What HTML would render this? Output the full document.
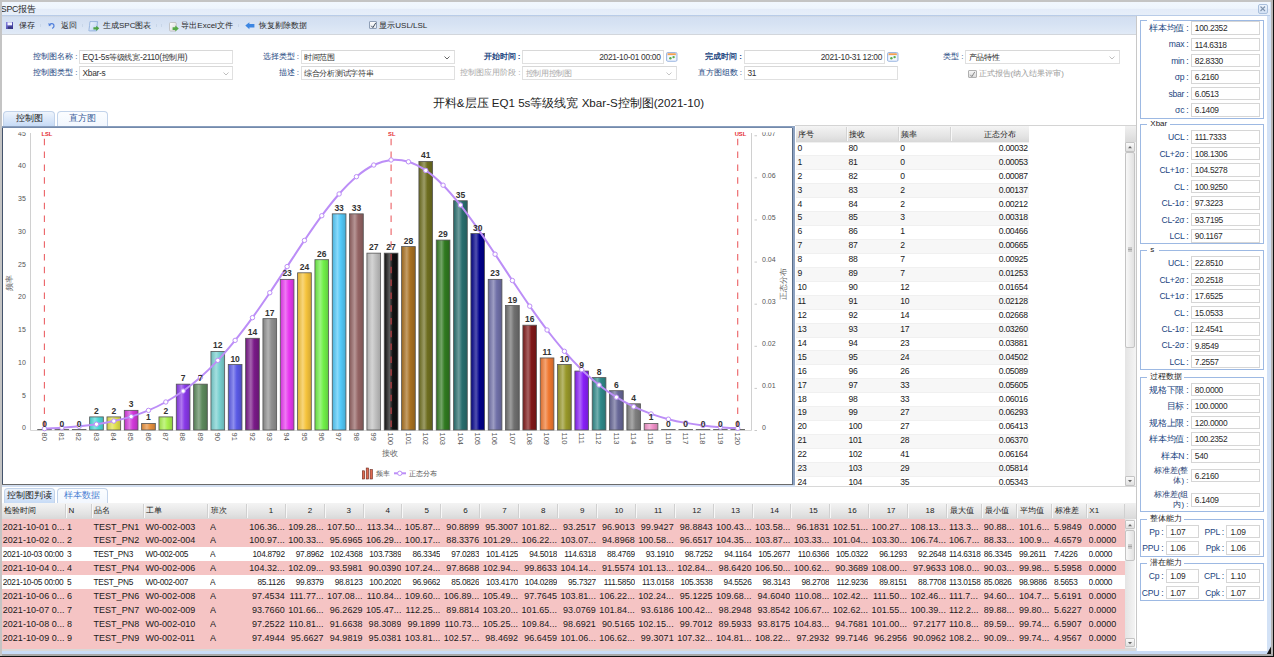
<!DOCTYPE html><html><head><meta charset="utf-8"><style>
*{margin:0;padding:0;box-sizing:border-box}
html,body{width:1274px;height:657px;overflow:hidden;background:#c4c4c4;position:relative;font-family:"Liberation Sans",sans-serif;font-size:8px;color:#222}
div{position:absolute;white-space:nowrap}
span{white-space:nowrap}
.lbl{color:#1f3f7a;text-align:right}
.inp{background:#fff;border:1px solid #d0d0d0;border-top-color:#c6c6c6}
.inpt{color:#333;font-size:8px}
</style></head><body><div style="left:1270.8px;top:0px;width:2.2px;height:657px;background:#b4b4b4"></div>
<div style="left:1273px;top:0px;width:1px;height:657px;background:#111"></div>
<div style="left:0px;top:656px;width:1274px;height:1px;background:#111"></div>
<div style="left:2px;top:2px;width:1268.8px;height:652px;background:#d3e2f6"></div>
<div style="left:2px;top:2px;width:1268px;height:13.5px;background:linear-gradient(#f1f7fe 0,#eef5fd 45%,#e4ecf9 52%,#e7eff9 100%)"></div>
<div style="left:2px;top:15px;width:1268px;height:1px;background:#b9cce8"></div>
<div style="left:2px;top:2px;width:200px;height:13px;overflow:hidden"><div style="left:-1.2px;top:1px;height:12px;line-height:12px;font-size:8.8px;color:#2a2a2a;letter-spacing:-0.3px">SPC报告</div></div>
<div style="left:1258px;top:4px;width:9.5px;height:9.5px;border:1px solid #a9bfdc;border-radius:2px;background:linear-gradient(#eef4fc,#d2e0f4)"><svg width="8" height="8" style="position:absolute;left:0;top:0"><path d="M1.5 1.5L6 6M6 1.5L1.5 6" stroke="#7f93ad" stroke-width="1.1"/></svg></div>
<div style="left:2px;top:16px;width:1134px;height:18.5px;background:linear-gradient(#cdd3dc 0,#d3dff1 6%,#d6e2f3 40%,#e2ebf7 100%)"></div>
<div style="left:2px;top:34px;width:1134px;height:1px;background:#d2d6dc"></div>
<div style="left:2px;top:35px;width:1134px;height:613px;background:#fff"></div>
<div style="left:1136px;top:16px;width:1px;height:632px;background:#c8c8c8"></div>
<div style="left:1137px;top:16px;width:129.5px;height:635px;background:#fff"></div>
<div style="left:2px;top:648px;width:1134px;height:3px;background:#d8d8d8"></div>
<div style="left:2px;top:651px;width:1266px;height:3px;background:#c9dcf7"></div>
<svg width="6" height="9" style="position:absolute;left:1266px;top:646px"><path d="M5 0.5 V8 H0.8 Z" fill="#151515"/></svg>
<div style="left:2px;top:654px;width:1271px;height:2px;background:#a8a8a8"></div>
<div style="left:6px;top:21.8px;width:7.5px;height:7px;"><svg width="8" height="8" style="position:absolute;left:0;top:0"><defs><linearGradient id="sv" x1="0" y1="0" x2="1" y2="1"><stop offset="0" stop-color="#8a86e6"/><stop offset="1" stop-color="#2c2a8a"/></linearGradient></defs><rect x="0" y="0" width="7" height="7" fill="url(#sv)"/><rect x="1.5" y="0.3" width="4.5" height="3" fill="#f4f4ff"/><rect x="2" y="4.6" width="3.5" height="2.2" fill="#3a3a7a"/></svg></div>
<div style="left:19px;top:19.5px;height:12px;line-height:12px;font-size:8px;color:#2a2a2a;padding-top:0.8px">保存</div>
<div style="left:39.5px;top:24px;width:1px;height:3px;background:#c8d6e8"></div>
<div style="left:47.5px;top:21.8px;width:8px;height:8px;"><svg width="8" height="8" style="position:absolute;left:0;top:0"><path d="M1.6 2.6 C3 1.3 5.2 1.4 5.9 3 C6.4 4.3 5.6 5.6 4.3 6.6" fill="none" stroke="#4f7fdc" stroke-width="1.3"/><path d="M0.3 0.9 L0.9 4.2 L3.4 2.9 Z" fill="#4f7fdc"/></svg></div>
<div style="left:60.5px;top:19.5px;height:12px;line-height:12px;font-size:8px;color:#2a2a2a;padding-top:0.8px">返回</div>
<div style="left:82px;top:24px;width:1px;height:3px;background:#c8d6e8"></div>
<div style="left:88px;top:20.5px;width:12px;height:11px;"><svg width="12" height="11" style="position:absolute;left:0;top:0"><defs><linearGradient id="spg" x1="0" y1="0" x2="1" y2="1"><stop offset="0" stop-color="#f4f8ff"/><stop offset="1" stop-color="#b8d0f0"/></linearGradient></defs><path d="M2 0.6 H9.6 C9 2.5 9.2 6 9.4 8.4 L8.6 9.9 H1.2 C0.7 9.6 0.6 9 1 8.6 C1.6 6 1.6 3 2 0.6 Z" fill="url(#spg)" stroke="#7da0d4" stroke-width="0.7"/><path d="M5.4 6.2 H8.2 V4.7 L11.3 7.3 L8.2 9.9 V8.4 H5.4 Z" fill="#4ea444"/></svg></div>
<div style="left:103px;top:19.5px;height:12px;line-height:12px;font-size:8px;color:#2a2a2a;padding-top:0.8px">生成SPC图表</div>
<div style="left:156px;top:24px;width:1px;height:3px;background:#c8d6e8"></div>
<div style="left:160.5px;top:24px;width:1px;height:3px;background:#c8d6e8"></div>
<div style="left:168.5px;top:21.5px;width:11px;height:10px;"><svg width="11" height="10" style="position:absolute;left:0;top:0"><defs><linearGradient id="exg" x1="0" y1="0" x2="1" y2="1"><stop offset="0" stop-color="#ffffff"/><stop offset="1" stop-color="#d8d8d8"/></linearGradient></defs><rect x="0.5" y="0.5" width="6.8" height="8.6" rx="1.2" fill="url(#exg)" stroke="#b4b4b4" stroke-width="0.7"/><path d="M3.6 5.3 H6.3 V3.6 L9.8 6.6 L6.3 9.6 V7.9 H3.6 Z" fill="#56aa48"/></svg></div>
<div style="left:181.3px;top:19.5px;height:12px;line-height:12px;font-size:8px;color:#2a2a2a;padding-top:0.8px">导出Excel文件</div>
<div style="left:237.5px;top:24px;width:1px;height:3px;background:#c8d6e8"></div>
<div style="left:245.3px;top:21.8px;width:10px;height:8px;"><svg width="10" height="8" style="position:absolute;left:0;top:0"><path d="M0.3 3.6 L4.4 0.2 V2 H9.4 V5.4 H4.4 V7.2 Z" fill="#3c86e2"/></svg></div>
<div style="left:259.3px;top:19.5px;height:12px;line-height:12px;font-size:8px;color:#2a2a2a;padding-top:0.8px">恢复剔除数据</div>
<div style="left:369px;top:20.8px;width:8.3px;height:8px;border:1px solid #8f9fb6;background:linear-gradient(#fbfbfb,#e6e9ee);border-radius:1px"><svg width="8" height="8" style="position:absolute;left:0;top:0"><path d="M1.3 3.8L2.9 5.6L5.8 0.8" stroke="#3f4c5c" stroke-width="1" fill="none"/></svg></div>
<div style="left:379.3px;top:19.5px;height:12px;line-height:12px;font-size:8px;color:#2a2a2a;padding-top:0.8px">显示USL/LSL</div>
<div style="left:-22.5px;top:49.5px;width:100px;height:14px;line-height:14px;font-size:8px;color:#23467f;text-align:right">控制图名称 :</div>
<div style="left:79px;top:49.5px;width:154px;height:14px;background:#fff;border:1px solid #e0e0e0;border-top-color:#d8d8d8"><div style="left:2.5px;top:0;height:12px;line-height:13px;color:#333;font-size:8.4px;letter-spacing:-0.3px">EQ1-5s等级线宽-2110(控制用)</div></div>
<div style="left:-22.5px;top:66.3px;width:100px;height:14px;line-height:14px;font-size:8px;color:#23467f;text-align:right">控制图类型 :</div>
<div style="left:79px;top:66.3px;width:154px;height:14px;background:#fff;border:1px solid #e0e0e0;border-top-color:#d8d8d8"><div style="left:2.5px;top:0;height:12px;line-height:13px;color:#333;font-size:8.4px;letter-spacing:-0.3px">Xbar-s</div><svg width="8" height="6" style="position:absolute;right:2.5px;top:4px"><path d="M1.5 1.5L4 4L6.5 1.5" stroke="#b8b8b8" stroke-width="0.9" fill="none"/></svg></div>
<div style="left:199px;top:49.5px;width:100px;height:14px;line-height:14px;font-size:8px;color:#23467f;text-align:right">选择类型 :</div>
<div style="left:300.5px;top:49.5px;width:154.0px;height:14px;background:#fff;border:1px solid #e0e0e0;border-top-color:#d8d8d8"><div style="left:2.5px;top:0;height:12px;line-height:13px;color:#333;font-size:8.4px;letter-spacing:-0.3px">时间范围</div><svg width="8" height="6" style="position:absolute;right:2.5px;top:4px"><path d="M1.5 1.5L4 4L6.5 1.5" stroke="#555" stroke-width="0.9" fill="none"/></svg></div>
<div style="left:199px;top:66.3px;width:100px;height:14px;line-height:14px;font-size:8px;color:#23467f;text-align:right">描述 :</div>
<div style="left:300.5px;top:66.3px;width:154.0px;height:14px;background:#fff;border:1px solid #e0e0e0;border-top-color:#d8d8d8"><div style="left:2.5px;top:0;height:12px;line-height:13px;color:#333;font-size:8.4px;letter-spacing:-0.3px">综合分析测试字符串</div></div>
<div style="left:420.5px;top:49.5px;width:100px;height:14px;line-height:14px;font-size:8px;color:#23467f;font-weight:bold;text-align:right">开始时间 :</div>
<div style="left:522px;top:49.5px;width:141.5px;height:14px;background:#fff;border:1px solid #e0e0e0;border-top-color:#d8d8d8"><div style="right:2px;top:0;height:12px;line-height:13px;color:#333;font-size:8.4px;letter-spacing:-0.3px">2021-10-01 00:00</div></div>
<svg width="12" height="10" style="position:absolute;left:665.5px;top:52px"><rect x="0.5" y="0.5" width="10.5" height="8.8" rx="1.3" fill="#dce8fa" stroke="#9fb9e3" stroke-width="1"/><rect x="1.6" y="1.3" width="8.2" height="2" fill="#f6a050"/><rect x="1.6" y="3.3" width="8.2" height="5" fill="#f4f8fd"/><circle cx="4.4" cy="6.3" r="1.2" fill="#5aac4e"/><circle cx="7.6" cy="5.1" r="1.2" fill="#5aac4e"/></svg>
<div style="left:420.5px;top:66.3px;width:100px;height:14px;line-height:14px;font-size:8px;color:#a8a8a8;text-align:right">控制图应用阶段 :</div>
<div style="left:522px;top:66.3px;width:154.5px;height:14px;background:#fff;border:1px solid #e0e0e0;border-top-color:#d8d8d8"><div style="left:2.5px;top:0;height:12px;line-height:13px;color:#a8a8a8;font-size:8.4px;letter-spacing:-0.3px">控制用控制图</div><svg width="8" height="6" style="position:absolute;right:2.5px;top:4px"><path d="M1.5 1.5L4 4L6.5 1.5" stroke="#c0c0c0" stroke-width="0.9" fill="none"/></svg></div>
<div style="left:642px;top:49.5px;width:100px;height:14px;line-height:14px;font-size:8px;color:#23467f;font-weight:bold;text-align:right">完成时间 :</div>
<div style="left:744px;top:49.5px;width:141px;height:14px;background:#fff;border:1px solid #e0e0e0;border-top-color:#d8d8d8"><div style="right:2px;top:0;height:12px;line-height:13px;color:#333;font-size:8.4px;letter-spacing:-0.3px">2021-10-31 12:00</div></div>
<svg width="12" height="10" style="position:absolute;left:886.5px;top:52px"><rect x="0.5" y="0.5" width="10.5" height="8.8" rx="1.3" fill="#dce8fa" stroke="#9fb9e3" stroke-width="1"/><rect x="1.6" y="1.3" width="8.2" height="2" fill="#f6a050"/><rect x="1.6" y="3.3" width="8.2" height="5" fill="#f4f8fd"/><circle cx="4.4" cy="6.3" r="1.2" fill="#5aac4e"/><circle cx="7.6" cy="5.1" r="1.2" fill="#5aac4e"/></svg>
<div style="left:642px;top:66.3px;width:100px;height:14px;line-height:14px;font-size:8px;color:#23467f;text-align:right">直方图组数 :</div>
<div style="left:744px;top:66.3px;width:153.5px;height:14px;background:#fff;border:1px solid #e0e0e0;border-top-color:#d8d8d8"><div style="left:2.5px;top:0;height:12px;line-height:13px;color:#333;font-size:8.4px;letter-spacing:-0.3px">31</div></div>
<div style="left:863.5px;top:49.5px;width:100px;height:14px;line-height:14px;font-size:8px;color:#23467f;text-align:right">类型 :</div>
<div style="left:965px;top:49.5px;width:154.5px;height:14px;background:#fff;border:1px solid #e0e0e0;border-top-color:#d8d8d8"><div style="left:2.5px;top:0;height:12px;line-height:13px;color:#222;font-size:8.4px;letter-spacing:-0.3px">产品特性</div><svg width="8" height="6" style="position:absolute;right:2.5px;top:4px"><path d="M1.5 1.5L4 4L6.5 1.5" stroke="#b8b8b8" stroke-width="0.9" fill="none"/></svg></div>
<div style="left:968px;top:69.8px;width:8.5px;height:8px;border:1px solid #b0b0b0;background:linear-gradient(#f6f6f6,#dcdcdc);border-radius:1px"><svg width="8" height="8" style="position:absolute;left:0;top:0"><path d="M1.3 3.8L2.9 5.6L5.8 0.8" stroke="#888" stroke-width="1" fill="none"/></svg></div>
<div style="left:978.5px;top:66.8px;height:13px;line-height:13px;font-size:8px;color:#9a9a9a">正式报告(纳入结果评审)</div>
<div style="left:300px;top:94.7px;width:536.8px;height:15px;line-height:15px;text-align:center;font-size:11.6px;color:#222">开料&amp;层压 EQ1 5s等级线宽 Xbar-S控制图(2021-10)</div>
<div style="left:3px;top:111px;width:52px;height:15px;background:linear-gradient(#eef4fc,#c7dbf6);border:1px solid #c2d3ea;border-bottom:none;border-radius:4px 4px 0 0;color:#1e1e1e"><div style="left:0;top:0;width:50px;height:15px;line-height:13px;text-align:center;font-size:8.5px">控制图</div></div>
<div style="left:56.5px;top:111px;width:51px;height:15px;background:linear-gradient(#fbfdff,#f2f7fe);border:1px solid #c2d3ea;border-bottom:none;border-radius:4px 4px 0 0;color:#3d5f9a"><div style="left:0;top:0;width:49px;height:15px;line-height:13px;text-align:center;font-size:8.5px">直方图</div></div>
<div style="left:2px;top:125.5px;width:793px;height:2.5px;background:linear-gradient(#93a8c6,#6a80a2)"></div>
<div style="left:2px;top:128px;width:793px;height:357px;background:#fff"></div>
<div style="left:2px;top:128px;width:1px;height:357px;background:#44546c"></div>
<div style="left:792px;top:126px;width:3px;height:359px;background:#8ea3c2"></div>
<div style="left:792px;top:128px;width:1px;height:357px;background:#5a6d88"></div>
<div style="left:2px;top:484px;width:791px;height:1.2px;background:#6b6b6b"></div>
<div style="left:2px;top:485.2px;width:793px;height:1.5px;background:#d2def0"></div>
<svg width="790" height="357" style="position:absolute;left:3px;top:128px"><defs><linearGradient id="g3" x1="0" y1="0" x2="1" y2="0"><stop offset="0" stop-color="#44c2c2"/><stop offset="0.38" stop-color="#85e4e4"/><stop offset="0.62" stop-color="#4cd8d8"/><stop offset="1" stop-color="#40b7b7"/></linearGradient><linearGradient id="g4" x1="0" y1="0" x2="1" y2="0"><stop offset="0" stop-color="#c9c944"/><stop offset="0.38" stop-color="#e9e985"/><stop offset="0.62" stop-color="#e0e04c"/><stop offset="1" stop-color="#bebe40"/></linearGradient><linearGradient id="g5" x1="0" y1="0" x2="1" y2="0"><stop offset="0" stop-color="#bd32c4"/><stop offset="0.38" stop-color="#e077e5"/><stop offset="0.62" stop-color="#d238da"/><stop offset="1" stop-color="#b22fb9"/></linearGradient><linearGradient id="g6" x1="0" y1="0" x2="1" y2="0"><stop offset="0" stop-color="#d08136"/><stop offset="0.38" stop-color="#efb37a"/><stop offset="0.62" stop-color="#e8903c"/><stop offset="1" stop-color="#c57a33"/></linearGradient><linearGradient id="g7" x1="0" y1="0" x2="1" y2="0"><stop offset="0" stop-color="#97d844"/><stop offset="0.38" stop-color="#c3f485"/><stop offset="0.62" stop-color="#a8f04c"/><stop offset="1" stop-color="#8ecc40"/></linearGradient><linearGradient id="g8" x1="0" y1="0" x2="1" y2="0"><stop offset="0" stop-color="#7a32d0"/><stop offset="0.38" stop-color="#ae77ef"/><stop offset="0.62" stop-color="#8838e8"/><stop offset="1" stop-color="#732fc5"/></linearGradient><linearGradient id="g9" x1="0" y1="0" x2="1" y2="0"><stop offset="0" stop-color="#547c54"/><stop offset="0.38" stop-color="#91af91"/><stop offset="0.62" stop-color="#5e8a5e"/><stop offset="1" stop-color="#4f754f"/></linearGradient><linearGradient id="g10" x1="0" y1="0" x2="1" y2="0"><stop offset="0" stop-color="#6cbbbb"/><stop offset="0.38" stop-color="#a3dfdf"/><stop offset="0.62" stop-color="#78d0d0"/><stop offset="1" stop-color="#66b0b0"/></linearGradient><linearGradient id="g11" x1="0" y1="0" x2="1" y2="0"><stop offset="0" stop-color="#5151cf"/><stop offset="0.38" stop-color="#8e8eee"/><stop offset="0.62" stop-color="#5a5ae6"/><stop offset="1" stop-color="#4c4cc3"/></linearGradient><linearGradient id="g12" x1="0" y1="0" x2="1" y2="0"><stop offset="0" stop-color="#6d177a"/><stop offset="0.38" stop-color="#a463ae"/><stop offset="0.62" stop-color="#7a1a88"/><stop offset="1" stop-color="#671673"/></linearGradient><linearGradient id="g13" x1="0" y1="0" x2="1" y2="0"><stop offset="0" stop-color="#818181"/><stop offset="0.38" stop-color="#b3b3b3"/><stop offset="0.62" stop-color="#909090"/><stop offset="1" stop-color="#7a7a7a"/></linearGradient><linearGradient id="g14" x1="0" y1="0" x2="1" y2="0"><stop offset="0" stop-color="#d032d8"/><stop offset="0.38" stop-color="#ef77f4"/><stop offset="0.62" stop-color="#e838f0"/><stop offset="1" stop-color="#c52fcc"/></linearGradient><linearGradient id="g15" x1="0" y1="0" x2="1" y2="0"><stop offset="0" stop-color="#ddb036"/><stop offset="0.38" stop-color="#f8d67a"/><stop offset="0.62" stop-color="#f6c43c"/><stop offset="1" stop-color="#d1a633"/></linearGradient><linearGradient id="g16" x1="0" y1="0" x2="1" y2="0"><stop offset="0" stop-color="#64d840"/><stop offset="0.38" stop-color="#9df482"/><stop offset="0.62" stop-color="#70f048"/><stop offset="1" stop-color="#5fcc3d"/></linearGradient><linearGradient id="g17" x1="0" y1="0" x2="1" y2="0"><stop offset="0" stop-color="#48b4df"/><stop offset="0.38" stop-color="#88d9fa"/><stop offset="0.62" stop-color="#50c8f8"/><stop offset="1" stop-color="#44aad2"/></linearGradient><linearGradient id="g18" x1="0" y1="0" x2="1" y2="0"><stop offset="0" stop-color="#855a5a"/><stop offset="0.38" stop-color="#b69595"/><stop offset="0.62" stop-color="#946464"/><stop offset="1" stop-color="#7d5555"/></linearGradient><linearGradient id="g19" x1="0" y1="0" x2="1" y2="0"><stop offset="0" stop-color="#acacac"/><stop offset="0.38" stop-color="#d4d4d4"/><stop offset="0.62" stop-color="#c0c0c0"/><stop offset="1" stop-color="#a3a3a3"/></linearGradient><linearGradient id="g20" x1="0" y1="0" x2="1" y2="0"><stop offset="0" stop-color="#0e0e0e"/><stop offset="0.38" stop-color="#5c5c5c"/><stop offset="0.62" stop-color="#101010"/><stop offset="1" stop-color="#0d0d0d"/></linearGradient><linearGradient id="g21" x1="0" y1="0" x2="1" y2="0"><stop offset="0" stop-color="#97641c"/><stop offset="0.38" stop-color="#c39d67"/><stop offset="0.62" stop-color="#a87020"/><stop offset="1" stop-color="#8e5f1b"/></linearGradient><linearGradient id="g22" x1="0" y1="0" x2="1" y2="0"><stop offset="0" stop-color="#63631c"/><stop offset="0.38" stop-color="#9c9c67"/><stop offset="0.62" stop-color="#6e6e20"/><stop offset="1" stop-color="#5d5d1b"/></linearGradient><linearGradient id="g23" x1="0" y1="0" x2="1" y2="0"><stop offset="0" stop-color="#2b6d1c"/><stop offset="0.38" stop-color="#72a467"/><stop offset="0.62" stop-color="#307a20"/><stop offset="1" stop-color="#28671b"/></linearGradient><linearGradient id="g24" x1="0" y1="0" x2="1" y2="0"><stop offset="0" stop-color="#256363"/><stop offset="0.38" stop-color="#6e9c9c"/><stop offset="0.62" stop-color="#2a6e6e"/><stop offset="1" stop-color="#235d5d"/></linearGradient><linearGradient id="g25" x1="0" y1="0" x2="1" y2="0"><stop offset="0" stop-color="#00007c"/><stop offset="0.38" stop-color="#5151af"/><stop offset="0.62" stop-color="#00008a"/><stop offset="1" stop-color="#000075"/></linearGradient><linearGradient id="g26" x1="0" y1="0" x2="1" y2="0"><stop offset="0" stop-color="#646497"/><stop offset="0.38" stop-color="#9d9dc3"/><stop offset="0.62" stop-color="#7070a8"/><stop offset="1" stop-color="#5f5f8e"/></linearGradient><linearGradient id="g27" x1="0" y1="0" x2="1" y2="0"><stop offset="0" stop-color="#646464"/><stop offset="0.38" stop-color="#9d9d9d"/><stop offset="0.62" stop-color="#707070"/><stop offset="1" stop-color="#5f5f5f"/></linearGradient><linearGradient id="g28" x1="0" y1="0" x2="1" y2="0"><stop offset="0" stop-color="#731515"/><stop offset="0.38" stop-color="#a86161"/><stop offset="0.62" stop-color="#801818"/><stop offset="1" stop-color="#6c1414"/></linearGradient><linearGradient id="g29" x1="0" y1="0" x2="1" y2="0"><stop offset="0" stop-color="#d86c2b"/><stop offset="0.38" stop-color="#f4a372"/><stop offset="0.62" stop-color="#f07830"/><stop offset="1" stop-color="#cc6628"/></linearGradient><linearGradient id="g30" x1="0" y1="0" x2="1" y2="0"><stop offset="0" stop-color="#888825"/><stop offset="0.38" stop-color="#b8b86e"/><stop offset="0.62" stop-color="#98982a"/><stop offset="1" stop-color="#818123"/></linearGradient><linearGradient id="g31" x1="0" y1="0" x2="1" y2="0"><stop offset="0" stop-color="#7a1cdf"/><stop offset="0.38" stop-color="#ae67fa"/><stop offset="0.62" stop-color="#8820f8"/><stop offset="1" stop-color="#731bd2"/></linearGradient><linearGradient id="g32" x1="0" y1="0" x2="1" y2="0"><stop offset="0" stop-color="#297a7a"/><stop offset="0.38" stop-color="#70aeae"/><stop offset="0.62" stop-color="#2e8888"/><stop offset="1" stop-color="#277373"/></linearGradient><linearGradient id="g33" x1="0" y1="0" x2="1" y2="0"><stop offset="0" stop-color="#5d5d88"/><stop offset="0.38" stop-color="#9898b8"/><stop offset="0.62" stop-color="#686898"/><stop offset="1" stop-color="#585881"/></linearGradient><linearGradient id="g34" x1="0" y1="0" x2="1" y2="0"><stop offset="0" stop-color="#737373"/><stop offset="0.38" stop-color="#a8a8a8"/><stop offset="0.62" stop-color="#808080"/><stop offset="1" stop-color="#6c6c6c"/></linearGradient><linearGradient id="g35" x1="0" y1="0" x2="1" y2="0"><stop offset="0" stop-color="#d881b4"/><stop offset="0.38" stop-color="#f4b3d9"/><stop offset="0.62" stop-color="#f090c8"/><stop offset="1" stop-color="#cc7aaa"/></linearGradient><clipPath id="clipTop"><rect x="0" y="4.2" width="790" height="360"/></clipPath></defs><line x1="27.5" y1="5" x2="27.5" y2="302.5" stroke="#d0d0d0" stroke-width="1"/><line x1="748.5" y1="5" x2="748.5" y2="302.5" stroke="#d0d0d0" stroke-width="1"/><line x1="27.5" y1="302.5" x2="748.5" y2="302.5" stroke="#d8d8d8" stroke-width="1"/><text clip-path="url(#clipTop)" x="22.8" y="302.4" font-size="7" fill="#555" text-anchor="end" font-family="Liberation Sans">0</text><text clip-path="url(#clipTop)" x="22.8" y="269.65" font-size="7" fill="#555" text-anchor="end" font-family="Liberation Sans">5</text><text clip-path="url(#clipTop)" x="22.8" y="236.89999999999998" font-size="7" fill="#555" text-anchor="end" font-family="Liberation Sans">10</text><text clip-path="url(#clipTop)" x="22.8" y="204.14999999999998" font-size="7" fill="#555" text-anchor="end" font-family="Liberation Sans">15</text><text clip-path="url(#clipTop)" x="22.8" y="171.39999999999998" font-size="7" fill="#555" text-anchor="end" font-family="Liberation Sans">20</text><text clip-path="url(#clipTop)" x="22.8" y="138.64999999999998" font-size="7" fill="#555" text-anchor="end" font-family="Liberation Sans">25</text><text clip-path="url(#clipTop)" x="22.8" y="105.9" font-size="7" fill="#555" text-anchor="end" font-family="Liberation Sans">30</text><text clip-path="url(#clipTop)" x="22.8" y="73.15" font-size="7" fill="#555" text-anchor="end" font-family="Liberation Sans">35</text><text clip-path="url(#clipTop)" x="22.8" y="40.400000000000006" font-size="7" fill="#555" text-anchor="end" font-family="Liberation Sans">40</text><text clip-path="url(#clipTop)" x="22.8" y="7.650000000000006" font-size="7" fill="#555" text-anchor="end" font-family="Liberation Sans">45</text><line x1="751.5" y1="302.5" x2="754" y2="302.5" stroke="#bbb" stroke-width="0.8"/><text clip-path="url(#clipTop)" x="759" y="302.4" font-size="7" fill="#555" font-family="Liberation Sans">0</text><line x1="751.5" y1="260.39285714285717" x2="754" y2="260.39285714285717" stroke="#bbb" stroke-width="0.8"/><text clip-path="url(#clipTop)" x="759" y="260.29285714285714" font-size="7" fill="#555" font-family="Liberation Sans">0.01</text><line x1="751.5" y1="218.28571428571428" x2="754" y2="218.28571428571428" stroke="#bbb" stroke-width="0.8"/><text clip-path="url(#clipTop)" x="759" y="218.18571428571425" font-size="7" fill="#555" font-family="Liberation Sans">0.02</text><line x1="751.5" y1="176.17857142857144" x2="754" y2="176.17857142857144" stroke="#bbb" stroke-width="0.8"/><text clip-path="url(#clipTop)" x="759" y="176.07857142857142" font-size="7" fill="#555" font-family="Liberation Sans">0.03</text><line x1="751.5" y1="134.07142857142856" x2="754" y2="134.07142857142856" stroke="#bbb" stroke-width="0.8"/><text clip-path="url(#clipTop)" x="759" y="133.97142857142853" font-size="7" fill="#555" font-family="Liberation Sans">0.04</text><line x1="751.5" y1="91.96428571428572" x2="754" y2="91.96428571428572" stroke="#bbb" stroke-width="0.8"/><text clip-path="url(#clipTop)" x="759" y="91.86428571428573" font-size="7" fill="#555" font-family="Liberation Sans">0.05</text><line x1="751.5" y1="49.85714285714289" x2="754" y2="49.85714285714289" stroke="#bbb" stroke-width="0.8"/><text clip-path="url(#clipTop)" x="759" y="49.757142857142895" font-size="7" fill="#555" font-family="Liberation Sans">0.06</text><line x1="751.5" y1="7.75" x2="754" y2="7.75" stroke="#bbb" stroke-width="0.8"/><text clip-path="url(#clipTop)" x="759" y="7.650000000000006" font-size="7" fill="#555" font-family="Liberation Sans">0.07</text><rect x="34.25" y="301.0" width="14.5" height="1.1" fill="#6a6a6a"/><rect x="51.58" y="301.0" width="14.5" height="1.1" fill="#6a6a6a"/><rect x="68.91" y="301.0" width="14.5" height="1.1" fill="#6a6a6a"/><rect x="86.64" y="288.9" width="13.7" height="13.100000000000023" fill="url(#g3)" stroke="#555" stroke-width="0.8"/><rect x="103.97" y="288.9" width="13.7" height="13.100000000000023" fill="url(#g4)" stroke="#555" stroke-width="0.8"/><rect x="121.29999999999998" y="282.35" width="13.7" height="19.649999999999977" fill="url(#g5)" stroke="#555" stroke-width="0.8"/><rect x="138.63" y="295.45" width="13.7" height="6.550000000000011" fill="url(#g6)" stroke="#555" stroke-width="0.8"/><rect x="155.96" y="288.9" width="13.7" height="13.100000000000023" fill="url(#g7)" stroke="#555" stroke-width="0.8"/><rect x="173.29" y="256.15" width="13.7" height="45.85000000000002" fill="url(#g8)" stroke="#555" stroke-width="0.8"/><rect x="190.61999999999998" y="256.15" width="13.7" height="45.85000000000002" fill="url(#g9)" stroke="#555" stroke-width="0.8"/><rect x="207.95" y="223.39999999999998" width="13.7" height="78.60000000000002" fill="url(#g10)" stroke="#555" stroke-width="0.8"/><rect x="225.28" y="236.5" width="13.7" height="65.5" fill="url(#g11)" stroke="#555" stroke-width="0.8"/><rect x="242.60999999999999" y="210.3" width="13.7" height="91.69999999999999" fill="url(#g12)" stroke="#555" stroke-width="0.8"/><rect x="259.93999999999994" y="190.64999999999998" width="13.7" height="111.35000000000002" fill="url(#g13)" stroke="#555" stroke-width="0.8"/><rect x="277.27" y="151.35000000000002" width="13.7" height="150.64999999999998" fill="url(#g14)" stroke="#555" stroke-width="0.8"/><rect x="294.59999999999997" y="144.8" width="13.7" height="157.2" fill="url(#g15)" stroke="#555" stroke-width="0.8"/><rect x="311.92999999999995" y="131.7" width="13.7" height="170.3" fill="url(#g16)" stroke="#555" stroke-width="0.8"/><rect x="329.25999999999993" y="85.85" width="13.7" height="216.15" fill="url(#g17)" stroke="#555" stroke-width="0.8"/><rect x="346.5899999999999" y="85.85" width="13.7" height="216.15" fill="url(#g18)" stroke="#555" stroke-width="0.8"/><rect x="363.91999999999996" y="125.15" width="13.7" height="176.85" fill="url(#g19)" stroke="#555" stroke-width="0.8"/><rect x="381.24999999999994" y="125.15" width="13.7" height="176.85" fill="url(#g20)" stroke="#555" stroke-width="0.8"/><rect x="398.5799999999999" y="118.6" width="13.7" height="183.4" fill="url(#g21)" stroke="#555" stroke-width="0.8"/><rect x="415.90999999999997" y="33.44999999999999" width="13.7" height="268.55" fill="url(#g22)" stroke="#555" stroke-width="0.8"/><rect x="433.23999999999995" y="112.05000000000001" width="13.7" height="189.95" fill="url(#g23)" stroke="#555" stroke-width="0.8"/><rect x="450.56999999999994" y="72.75" width="13.7" height="229.25" fill="url(#g24)" stroke="#555" stroke-width="0.8"/><rect x="467.8999999999999" y="105.5" width="13.7" height="196.5" fill="url(#g25)" stroke="#555" stroke-width="0.8"/><rect x="485.2299999999999" y="151.35000000000002" width="13.7" height="150.64999999999998" fill="url(#g26)" stroke="#555" stroke-width="0.8"/><rect x="502.55999999999995" y="177.55" width="13.7" height="124.44999999999999" fill="url(#g27)" stroke="#555" stroke-width="0.8"/><rect x="519.89" y="197.2" width="13.7" height="104.80000000000001" fill="url(#g28)" stroke="#555" stroke-width="0.8"/><rect x="537.2199999999999" y="229.95" width="13.7" height="72.05000000000001" fill="url(#g29)" stroke="#555" stroke-width="0.8"/><rect x="554.55" y="236.5" width="13.7" height="65.5" fill="url(#g30)" stroke="#555" stroke-width="0.8"/><rect x="571.8799999999999" y="243.05" width="13.7" height="58.94999999999999" fill="url(#g31)" stroke="#555" stroke-width="0.8"/><rect x="589.2099999999999" y="249.60000000000002" width="13.7" height="52.39999999999998" fill="url(#g32)" stroke="#555" stroke-width="0.8"/><rect x="606.54" y="262.7" width="13.7" height="39.30000000000001" fill="url(#g33)" stroke="#555" stroke-width="0.8"/><rect x="623.8699999999999" y="275.8" width="13.7" height="26.19999999999999" fill="url(#g34)" stroke="#555" stroke-width="0.8"/><rect x="641.1999999999999" y="295.45" width="13.7" height="6.550000000000011" fill="url(#g35)" stroke="#555" stroke-width="0.8"/><rect x="658.1299999999999" y="301.0" width="14.5" height="1.1" fill="#6a6a6a"/><rect x="675.4599999999999" y="301.0" width="14.5" height="1.1" fill="#6a6a6a"/><rect x="692.79" y="301.0" width="14.5" height="1.1" fill="#6a6a6a"/><rect x="710.1199999999999" y="301.0" width="14.5" height="1.1" fill="#6a6a6a"/><rect x="727.4499999999999" y="301.0" width="14.5" height="1.1" fill="#6a6a6a"/><line x1="41.4" y1="10.800000000000011" x2="41.4" y2="302.0" stroke="#e8454a" stroke-opacity="0.85" stroke-width="1.1" stroke-dasharray="6.5 6.3"/><text x="38.4" y="8.400000000000006" font-size="5.8" font-weight="bold" fill="#e42a30" font-family="Liberation Sans">LSL</text><line x1="388.1" y1="10.800000000000011" x2="388.1" y2="302.0" stroke="#e8454a" stroke-opacity="0.85" stroke-width="1.1" stroke-dasharray="6.5 6.3"/><text x="385.1" y="8.400000000000006" font-size="5.8" font-weight="bold" fill="#e42a30" font-family="Liberation Sans">SL</text><line x1="734.7" y1="10.800000000000011" x2="734.7" y2="302.0" stroke="#e8454a" stroke-opacity="0.85" stroke-width="1.1" stroke-dasharray="6.5 6.3"/><text x="731.7" y="8.400000000000006" font-size="5.8" font-weight="bold" fill="#e42a30" font-family="Liberation Sans">USL</text><path d="M41.50,300.65 C44.39,300.51 53.05,300.15 58.83,299.77 C64.61,299.38 70.38,298.93 76.16,298.34 C81.94,297.75 87.71,297.11 93.49,296.23 C99.27,295.35 105.04,294.34 110.82,293.07 C116.60,291.80 122.37,290.39 128.15,288.61 C133.93,286.83 139.70,284.81 145.48,282.38 C151.26,279.94 157.03,277.22 162.81,274.00 C168.59,270.78 174.36,267.18 180.14,263.05 C185.92,258.92 191.69,254.36 197.47,249.24 C203.25,244.12 209.02,238.50 214.80,232.35 C220.58,226.21 226.35,219.47 232.13,212.35 C237.91,205.24 243.68,197.60 249.46,189.66 C255.24,181.72 261.01,173.24 266.79,164.73 C272.57,156.22 278.34,147.30 284.12,138.58 C289.90,129.87 295.67,120.91 301.45,112.43 C307.23,103.96 313.00,95.46 318.78,87.72 C324.56,79.98 330.33,72.50 336.11,65.99 C341.89,59.48 347.66,53.51 353.44,48.68 C359.22,43.86 364.99,39.81 370.77,37.02 C376.55,34.23 382.32,32.51 388.10,31.97 C393.88,31.43 399.65,32.03 405.43,33.78 C411.21,35.52 416.98,38.55 422.76,42.45 C428.54,46.35 434.31,51.42 440.09,57.19 C445.87,62.96 451.64,69.84 457.42,77.06 C463.20,84.29 468.97,92.37 474.75,100.56 C480.53,108.75 486.30,117.54 492.08,126.20 C497.86,134.86 503.63,143.86 509.41,152.52 C515.19,161.18 520.96,169.92 526.74,178.16 C532.52,186.41 538.29,194.47 544.07,202.00 C549.85,209.52 555.62,216.69 561.40,223.30 C567.18,229.91 572.95,236.05 578.73,241.66 C584.51,247.27 590.28,252.36 596.06,256.95 C601.84,261.54 607.61,265.57 613.39,269.20 C619.17,272.83 624.94,275.93 630.72,278.71 C636.50,281.50 642.27,283.84 648.05,285.92 C653.83,287.99 659.60,289.68 665.38,291.18 C671.16,292.67 676.93,293.84 682.71,294.88 C688.49,295.93 694.26,296.74 700.04,297.45 C705.82,298.17 711.59,298.71 717.37,299.18 C723.15,299.65 731.81,300.09 734.70,300.27" fill="none" stroke="#bc8ef7" stroke-width="2"/><circle cx="41.50" cy="300.65" r="2.2" fill="#fff" stroke="#bc8ef7" stroke-width="1"/><circle cx="58.83" cy="299.77" r="2.2" fill="#fff" stroke="#bc8ef7" stroke-width="1"/><circle cx="76.16" cy="298.34" r="2.2" fill="#fff" stroke="#bc8ef7" stroke-width="1"/><circle cx="93.49" cy="296.23" r="2.2" fill="#fff" stroke="#bc8ef7" stroke-width="1"/><circle cx="110.82" cy="293.07" r="2.2" fill="#fff" stroke="#bc8ef7" stroke-width="1"/><circle cx="128.15" cy="288.61" r="2.2" fill="#fff" stroke="#bc8ef7" stroke-width="1"/><circle cx="145.48" cy="282.38" r="2.2" fill="#fff" stroke="#bc8ef7" stroke-width="1"/><circle cx="162.81" cy="274.00" r="2.2" fill="#fff" stroke="#bc8ef7" stroke-width="1"/><circle cx="180.14" cy="263.05" r="2.2" fill="#fff" stroke="#bc8ef7" stroke-width="1"/><circle cx="197.47" cy="249.24" r="2.2" fill="#fff" stroke="#bc8ef7" stroke-width="1"/><circle cx="214.80" cy="232.35" r="2.2" fill="#fff" stroke="#bc8ef7" stroke-width="1"/><circle cx="232.13" cy="212.35" r="2.2" fill="#fff" stroke="#bc8ef7" stroke-width="1"/><circle cx="249.46" cy="189.66" r="2.2" fill="#fff" stroke="#bc8ef7" stroke-width="1"/><circle cx="266.79" cy="164.73" r="2.2" fill="#fff" stroke="#bc8ef7" stroke-width="1"/><circle cx="284.12" cy="138.58" r="2.2" fill="#fff" stroke="#bc8ef7" stroke-width="1"/><circle cx="301.45" cy="112.43" r="2.2" fill="#fff" stroke="#bc8ef7" stroke-width="1"/><circle cx="318.78" cy="87.72" r="2.2" fill="#fff" stroke="#bc8ef7" stroke-width="1"/><circle cx="336.11" cy="65.99" r="2.2" fill="#fff" stroke="#bc8ef7" stroke-width="1"/><circle cx="353.44" cy="48.68" r="2.2" fill="#fff" stroke="#bc8ef7" stroke-width="1"/><circle cx="370.77" cy="37.02" r="2.2" fill="#fff" stroke="#bc8ef7" stroke-width="1"/><circle cx="388.10" cy="31.97" r="2.2" fill="#fff" stroke="#bc8ef7" stroke-width="1"/><circle cx="405.43" cy="33.78" r="2.2" fill="#fff" stroke="#bc8ef7" stroke-width="1"/><circle cx="422.76" cy="42.45" r="2.2" fill="#fff" stroke="#bc8ef7" stroke-width="1"/><circle cx="440.09" cy="57.19" r="2.2" fill="#fff" stroke="#bc8ef7" stroke-width="1"/><circle cx="457.42" cy="77.06" r="2.2" fill="#fff" stroke="#bc8ef7" stroke-width="1"/><circle cx="474.75" cy="100.56" r="2.2" fill="#fff" stroke="#bc8ef7" stroke-width="1"/><circle cx="492.08" cy="126.20" r="2.2" fill="#fff" stroke="#bc8ef7" stroke-width="1"/><circle cx="509.41" cy="152.52" r="2.2" fill="#fff" stroke="#bc8ef7" stroke-width="1"/><circle cx="526.74" cy="178.16" r="2.2" fill="#fff" stroke="#bc8ef7" stroke-width="1"/><circle cx="544.07" cy="202.00" r="2.2" fill="#fff" stroke="#bc8ef7" stroke-width="1"/><circle cx="561.40" cy="223.30" r="2.2" fill="#fff" stroke="#bc8ef7" stroke-width="1"/><circle cx="578.73" cy="241.66" r="2.2" fill="#fff" stroke="#bc8ef7" stroke-width="1"/><circle cx="596.06" cy="256.95" r="2.2" fill="#fff" stroke="#bc8ef7" stroke-width="1"/><circle cx="613.39" cy="269.20" r="2.2" fill="#fff" stroke="#bc8ef7" stroke-width="1"/><circle cx="630.72" cy="278.71" r="2.2" fill="#fff" stroke="#bc8ef7" stroke-width="1"/><circle cx="648.05" cy="285.92" r="2.2" fill="#fff" stroke="#bc8ef7" stroke-width="1"/><circle cx="665.38" cy="291.18" r="2.2" fill="#fff" stroke="#bc8ef7" stroke-width="1"/><circle cx="682.71" cy="294.88" r="2.2" fill="#fff" stroke="#bc8ef7" stroke-width="1"/><circle cx="700.04" cy="297.45" r="2.2" fill="#fff" stroke="#bc8ef7" stroke-width="1"/><circle cx="717.37" cy="299.18" r="2.2" fill="#fff" stroke="#bc8ef7" stroke-width="1"/><circle cx="734.70" cy="300.27" r="2.2" fill="#fff" stroke="#bc8ef7" stroke-width="1"/><text x="41.50" y="299.00" font-size="8.5" font-weight="bold" fill="#333" text-anchor="middle" font-family="Liberation Sans">0</text><text x="58.83" y="299.00" font-size="8.5" font-weight="bold" fill="#333" text-anchor="middle" font-family="Liberation Sans">0</text><text x="76.16" y="299.00" font-size="8.5" font-weight="bold" fill="#333" text-anchor="middle" font-family="Liberation Sans">0</text><text x="93.49" y="285.90" font-size="8.5" font-weight="bold" fill="#333" text-anchor="middle" font-family="Liberation Sans">2</text><text x="110.82" y="285.90" font-size="8.5" font-weight="bold" fill="#333" text-anchor="middle" font-family="Liberation Sans">2</text><text x="128.15" y="279.35" font-size="8.5" font-weight="bold" fill="#333" text-anchor="middle" font-family="Liberation Sans">3</text><text x="145.48" y="292.45" font-size="8.5" font-weight="bold" fill="#333" text-anchor="middle" font-family="Liberation Sans">1</text><text x="162.81" y="285.90" font-size="8.5" font-weight="bold" fill="#333" text-anchor="middle" font-family="Liberation Sans">2</text><text x="180.14" y="253.15" font-size="8.5" font-weight="bold" fill="#333" text-anchor="middle" font-family="Liberation Sans">7</text><text x="197.47" y="253.15" font-size="8.5" font-weight="bold" fill="#333" text-anchor="middle" font-family="Liberation Sans">7</text><text x="214.80" y="220.40" font-size="8.5" font-weight="bold" fill="#333" text-anchor="middle" font-family="Liberation Sans">12</text><text x="232.13" y="233.50" font-size="8.5" font-weight="bold" fill="#333" text-anchor="middle" font-family="Liberation Sans">10</text><text x="249.46" y="207.30" font-size="8.5" font-weight="bold" fill="#333" text-anchor="middle" font-family="Liberation Sans">14</text><text x="266.79" y="187.65" font-size="8.5" font-weight="bold" fill="#333" text-anchor="middle" font-family="Liberation Sans">17</text><text x="284.12" y="148.35" font-size="8.5" font-weight="bold" fill="#333" text-anchor="middle" font-family="Liberation Sans">23</text><text x="301.45" y="141.80" font-size="8.5" font-weight="bold" fill="#333" text-anchor="middle" font-family="Liberation Sans">24</text><text x="318.78" y="128.70" font-size="8.5" font-weight="bold" fill="#333" text-anchor="middle" font-family="Liberation Sans">26</text><text x="336.11" y="82.85" font-size="8.5" font-weight="bold" fill="#333" text-anchor="middle" font-family="Liberation Sans">33</text><text x="353.44" y="82.85" font-size="8.5" font-weight="bold" fill="#333" text-anchor="middle" font-family="Liberation Sans">33</text><text x="370.77" y="122.15" font-size="8.5" font-weight="bold" fill="#333" text-anchor="middle" font-family="Liberation Sans">27</text><text x="388.10" y="122.15" font-size="8.5" font-weight="bold" fill="#333" text-anchor="middle" font-family="Liberation Sans">27</text><text x="405.43" y="115.60" font-size="8.5" font-weight="bold" fill="#333" text-anchor="middle" font-family="Liberation Sans">28</text><text x="422.76" y="30.45" font-size="8.5" font-weight="bold" fill="#333" text-anchor="middle" font-family="Liberation Sans">41</text><text x="440.09" y="109.05" font-size="8.5" font-weight="bold" fill="#333" text-anchor="middle" font-family="Liberation Sans">29</text><text x="457.42" y="69.75" font-size="8.5" font-weight="bold" fill="#333" text-anchor="middle" font-family="Liberation Sans">35</text><text x="474.75" y="102.50" font-size="8.5" font-weight="bold" fill="#333" text-anchor="middle" font-family="Liberation Sans">30</text><text x="492.08" y="148.35" font-size="8.5" font-weight="bold" fill="#333" text-anchor="middle" font-family="Liberation Sans">23</text><text x="509.41" y="174.55" font-size="8.5" font-weight="bold" fill="#333" text-anchor="middle" font-family="Liberation Sans">19</text><text x="526.74" y="194.20" font-size="8.5" font-weight="bold" fill="#333" text-anchor="middle" font-family="Liberation Sans">16</text><text x="544.07" y="226.95" font-size="8.5" font-weight="bold" fill="#333" text-anchor="middle" font-family="Liberation Sans">11</text><text x="561.40" y="233.50" font-size="8.5" font-weight="bold" fill="#333" text-anchor="middle" font-family="Liberation Sans">10</text><text x="578.73" y="240.05" font-size="8.5" font-weight="bold" fill="#333" text-anchor="middle" font-family="Liberation Sans">9</text><text x="596.06" y="246.60" font-size="8.5" font-weight="bold" fill="#333" text-anchor="middle" font-family="Liberation Sans">8</text><text x="613.39" y="259.70" font-size="8.5" font-weight="bold" fill="#333" text-anchor="middle" font-family="Liberation Sans">6</text><text x="630.72" y="272.80" font-size="8.5" font-weight="bold" fill="#333" text-anchor="middle" font-family="Liberation Sans">4</text><text x="648.05" y="292.45" font-size="8.5" font-weight="bold" fill="#333" text-anchor="middle" font-family="Liberation Sans">1</text><text x="665.38" y="299.00" font-size="8.5" font-weight="bold" fill="#333" text-anchor="middle" font-family="Liberation Sans">0</text><text x="682.71" y="299.00" font-size="8.5" font-weight="bold" fill="#333" text-anchor="middle" font-family="Liberation Sans">0</text><text x="700.04" y="299.00" font-size="8.5" font-weight="bold" fill="#333" text-anchor="middle" font-family="Liberation Sans">0</text><text x="717.37" y="299.00" font-size="8.5" font-weight="bold" fill="#333" text-anchor="middle" font-family="Liberation Sans">0</text><text x="734.70" y="299.00" font-size="8.5" font-weight="bold" fill="#333" text-anchor="middle" font-family="Liberation Sans">0</text><text transform="translate(38.80,304.50) rotate(90)" font-size="7.5" fill="#555" font-family="Liberation Sans">80</text><text transform="translate(56.13,304.50) rotate(90)" font-size="7.5" fill="#555" font-family="Liberation Sans">81</text><text transform="translate(73.46,304.50) rotate(90)" font-size="7.5" fill="#555" font-family="Liberation Sans">82</text><text transform="translate(90.79,304.50) rotate(90)" font-size="7.5" fill="#555" font-family="Liberation Sans">83</text><text transform="translate(108.12,304.50) rotate(90)" font-size="7.5" fill="#555" font-family="Liberation Sans">84</text><text transform="translate(125.45,304.50) rotate(90)" font-size="7.5" fill="#555" font-family="Liberation Sans">85</text><text transform="translate(142.78,304.50) rotate(90)" font-size="7.5" fill="#555" font-family="Liberation Sans">86</text><text transform="translate(160.11,304.50) rotate(90)" font-size="7.5" fill="#555" font-family="Liberation Sans">87</text><text transform="translate(177.44,304.50) rotate(90)" font-size="7.5" fill="#555" font-family="Liberation Sans">88</text><text transform="translate(194.77,304.50) rotate(90)" font-size="7.5" fill="#555" font-family="Liberation Sans">89</text><text transform="translate(212.10,304.50) rotate(90)" font-size="7.5" fill="#555" font-family="Liberation Sans">90</text><text transform="translate(229.43,304.50) rotate(90)" font-size="7.5" fill="#555" font-family="Liberation Sans">91</text><text transform="translate(246.76,304.50) rotate(90)" font-size="7.5" fill="#555" font-family="Liberation Sans">92</text><text transform="translate(264.09,304.50) rotate(90)" font-size="7.5" fill="#555" font-family="Liberation Sans">93</text><text transform="translate(281.42,304.50) rotate(90)" font-size="7.5" fill="#555" font-family="Liberation Sans">94</text><text transform="translate(298.75,304.50) rotate(90)" font-size="7.5" fill="#555" font-family="Liberation Sans">95</text><text transform="translate(316.08,304.50) rotate(90)" font-size="7.5" fill="#555" font-family="Liberation Sans">96</text><text transform="translate(333.41,304.50) rotate(90)" font-size="7.5" fill="#555" font-family="Liberation Sans">97</text><text transform="translate(350.74,304.50) rotate(90)" font-size="7.5" fill="#555" font-family="Liberation Sans">98</text><text transform="translate(368.07,304.50) rotate(90)" font-size="7.5" fill="#555" font-family="Liberation Sans">99</text><text transform="translate(385.40,304.50) rotate(90)" font-size="7.5" fill="#555" font-family="Liberation Sans">100</text><text transform="translate(402.73,304.50) rotate(90)" font-size="7.5" fill="#555" font-family="Liberation Sans">101</text><text transform="translate(420.06,304.50) rotate(90)" font-size="7.5" fill="#555" font-family="Liberation Sans">102</text><text transform="translate(437.39,304.50) rotate(90)" font-size="7.5" fill="#555" font-family="Liberation Sans">103</text><text transform="translate(454.72,304.50) rotate(90)" font-size="7.5" fill="#555" font-family="Liberation Sans">104</text><text transform="translate(472.05,304.50) rotate(90)" font-size="7.5" fill="#555" font-family="Liberation Sans">105</text><text transform="translate(489.38,304.50) rotate(90)" font-size="7.5" fill="#555" font-family="Liberation Sans">106</text><text transform="translate(506.71,304.50) rotate(90)" font-size="7.5" fill="#555" font-family="Liberation Sans">107</text><text transform="translate(524.04,304.50) rotate(90)" font-size="7.5" fill="#555" font-family="Liberation Sans">108</text><text transform="translate(541.37,304.50) rotate(90)" font-size="7.5" fill="#555" font-family="Liberation Sans">109</text><text transform="translate(558.70,304.50) rotate(90)" font-size="7.5" fill="#555" font-family="Liberation Sans">110</text><text transform="translate(576.03,304.50) rotate(90)" font-size="7.5" fill="#555" font-family="Liberation Sans">111</text><text transform="translate(593.36,304.50) rotate(90)" font-size="7.5" fill="#555" font-family="Liberation Sans">112</text><text transform="translate(610.69,304.50) rotate(90)" font-size="7.5" fill="#555" font-family="Liberation Sans">113</text><text transform="translate(628.02,304.50) rotate(90)" font-size="7.5" fill="#555" font-family="Liberation Sans">114</text><text transform="translate(645.35,304.50) rotate(90)" font-size="7.5" fill="#555" font-family="Liberation Sans">115</text><text transform="translate(662.68,304.50) rotate(90)" font-size="7.5" fill="#555" font-family="Liberation Sans">116</text><text transform="translate(680.01,304.50) rotate(90)" font-size="7.5" fill="#555" font-family="Liberation Sans">117</text><text transform="translate(697.34,304.50) rotate(90)" font-size="7.5" fill="#555" font-family="Liberation Sans">118</text><text transform="translate(714.67,304.50) rotate(90)" font-size="7.5" fill="#555" font-family="Liberation Sans">119</text><text transform="translate(732.00,304.50) rotate(90)" font-size="7.5" fill="#555" font-family="Liberation Sans">120</text><text transform="translate(9,155) rotate(-90)" font-size="7.5" fill="#666" text-anchor="middle" font-family="Liberation Sans">频率</text><text transform="translate(782.6,155.60000000000002) rotate(-90)" font-size="7.5" fill="#666" text-anchor="middle" font-family="Liberation Sans">正态分布</text><text x="387" y="327.5" font-size="7.5" fill="#666" text-anchor="middle" font-family="Liberation Sans">接收</text><rect x="359.3" y="342.8" width="2.4" height="8.2" fill="#e06a50" stroke="#6a2a20" stroke-width="0.6"/><rect x="363.2" y="340" width="2.4" height="11" fill="#e06a50" stroke="#6a2a20" stroke-width="0.6"/><rect x="367.1" y="341.6" width="2.4" height="9.4" fill="#e06a50" stroke="#6a2a20" stroke-width="0.6"/><text x="373" y="347.8" font-size="7" fill="#555" font-family="Liberation Sans">频率</text><line x1="391" y1="345.3" x2="403" y2="345.3" stroke="#bc8ef7" stroke-width="2"/><circle cx="396.8" cy="345.3" r="2.2" fill="#fff" stroke="#bc8ef7" stroke-width="1"/><text x="405.5" y="348" font-size="7" fill="#555" font-family="Liberation Sans">正态分布</text></svg>
<div style="left:795px;top:125px;width:341px;height:1px;background:#d4d4d4"></div>
<div style="left:795.5px;top:126px;width:233.5px;height:15.5px;background:linear-gradient(#f4f4f4,#e2e2e2 70%,#d8d8d8);"></div>
<div style="left:847px;top:127px;width:1px;height:14px;background:#f8f8f8"></div>
<div style="left:846px;top:127px;width:1px;height:14px;background:#d4d4d4"></div>
<div style="left:898.7px;top:127px;width:1px;height:14px;background:#f8f8f8"></div>
<div style="left:897.7px;top:127px;width:1px;height:14px;background:#d4d4d4"></div>
<div style="left:951px;top:127px;width:1px;height:14px;background:#f8f8f8"></div>
<div style="left:950px;top:127px;width:1px;height:14px;background:#d4d4d4"></div>
<div style="left:798px;top:126.8px;height:15.5px;line-height:15.5px;font-size:8px;color:#222">序号</div>
<div style="left:849px;top:126.8px;height:15.5px;line-height:15.5px;font-size:8px;color:#222">接收</div>
<div style="left:900.7px;top:126.8px;height:15.5px;line-height:15.5px;font-size:8px;color:#222">频率</div>
<div style="left:951px;top:126.8px;width:65px;height:15.5px;line-height:15.5px;font-size:8px;color:#222;text-align:right">正态分布</div>
<div style="left:795.5px;top:141.5px;width:233.5px;height:13.93px;background:#fff;border-top:1px solid #f0f0f0"></div>
<div style="left:797.5px;top:141.8px;height:13.93px;line-height:13.93px;font-size:8.6px;letter-spacing:-0.3px;color:#1a1a1a">0</div>
<div style="left:848.5px;top:141.8px;height:13.93px;line-height:13.93px;font-size:8.6px;letter-spacing:-0.3px;color:#1a1a1a">80</div>
<div style="left:900.2px;top:141.8px;height:13.93px;line-height:13.93px;font-size:8.6px;letter-spacing:-0.3px;color:#1a1a1a">0</div>
<div style="left:951px;top:141.8px;width:76.8px;height:13.93px;line-height:13.93px;font-size:8.6px;letter-spacing:-0.3px;color:#1a1a1a;text-align:right">0.00032</div>
<div style="left:795.5px;top:155.43px;width:233.5px;height:13.93px;background:#f7f7f7;border-top:1px solid #f0f0f0"></div>
<div style="left:797.5px;top:155.73000000000002px;height:13.93px;line-height:13.93px;font-size:8.6px;letter-spacing:-0.3px;color:#1a1a1a">1</div>
<div style="left:848.5px;top:155.73000000000002px;height:13.93px;line-height:13.93px;font-size:8.6px;letter-spacing:-0.3px;color:#1a1a1a">81</div>
<div style="left:900.2px;top:155.73000000000002px;height:13.93px;line-height:13.93px;font-size:8.6px;letter-spacing:-0.3px;color:#1a1a1a">0</div>
<div style="left:951px;top:155.73000000000002px;width:76.8px;height:13.93px;line-height:13.93px;font-size:8.6px;letter-spacing:-0.3px;color:#1a1a1a;text-align:right">0.00053</div>
<div style="left:795.5px;top:169.36px;width:233.5px;height:13.93px;background:#fff;border-top:1px solid #f0f0f0"></div>
<div style="left:797.5px;top:169.66000000000003px;height:13.93px;line-height:13.93px;font-size:8.6px;letter-spacing:-0.3px;color:#1a1a1a">2</div>
<div style="left:848.5px;top:169.66000000000003px;height:13.93px;line-height:13.93px;font-size:8.6px;letter-spacing:-0.3px;color:#1a1a1a">82</div>
<div style="left:900.2px;top:169.66000000000003px;height:13.93px;line-height:13.93px;font-size:8.6px;letter-spacing:-0.3px;color:#1a1a1a">0</div>
<div style="left:951px;top:169.66000000000003px;width:76.8px;height:13.93px;line-height:13.93px;font-size:8.6px;letter-spacing:-0.3px;color:#1a1a1a;text-align:right">0.00087</div>
<div style="left:795.5px;top:183.29px;width:233.5px;height:13.93px;background:#f7f7f7;border-top:1px solid #f0f0f0"></div>
<div style="left:797.5px;top:183.59px;height:13.93px;line-height:13.93px;font-size:8.6px;letter-spacing:-0.3px;color:#1a1a1a">3</div>
<div style="left:848.5px;top:183.59px;height:13.93px;line-height:13.93px;font-size:8.6px;letter-spacing:-0.3px;color:#1a1a1a">83</div>
<div style="left:900.2px;top:183.59px;height:13.93px;line-height:13.93px;font-size:8.6px;letter-spacing:-0.3px;color:#1a1a1a">2</div>
<div style="left:951px;top:183.59px;width:76.8px;height:13.93px;line-height:13.93px;font-size:8.6px;letter-spacing:-0.3px;color:#1a1a1a;text-align:right">0.00137</div>
<div style="left:795.5px;top:197.22px;width:233.5px;height:13.93px;background:#fff;border-top:1px solid #f0f0f0"></div>
<div style="left:797.5px;top:197.52px;height:13.93px;line-height:13.93px;font-size:8.6px;letter-spacing:-0.3px;color:#1a1a1a">4</div>
<div style="left:848.5px;top:197.52px;height:13.93px;line-height:13.93px;font-size:8.6px;letter-spacing:-0.3px;color:#1a1a1a">84</div>
<div style="left:900.2px;top:197.52px;height:13.93px;line-height:13.93px;font-size:8.6px;letter-spacing:-0.3px;color:#1a1a1a">2</div>
<div style="left:951px;top:197.52px;width:76.8px;height:13.93px;line-height:13.93px;font-size:8.6px;letter-spacing:-0.3px;color:#1a1a1a;text-align:right">0.00212</div>
<div style="left:795.5px;top:211.15px;width:233.5px;height:13.93px;background:#f7f7f7;border-top:1px solid #f0f0f0"></div>
<div style="left:797.5px;top:211.45000000000002px;height:13.93px;line-height:13.93px;font-size:8.6px;letter-spacing:-0.3px;color:#1a1a1a">5</div>
<div style="left:848.5px;top:211.45000000000002px;height:13.93px;line-height:13.93px;font-size:8.6px;letter-spacing:-0.3px;color:#1a1a1a">85</div>
<div style="left:900.2px;top:211.45000000000002px;height:13.93px;line-height:13.93px;font-size:8.6px;letter-spacing:-0.3px;color:#1a1a1a">3</div>
<div style="left:951px;top:211.45000000000002px;width:76.8px;height:13.93px;line-height:13.93px;font-size:8.6px;letter-spacing:-0.3px;color:#1a1a1a;text-align:right">0.00318</div>
<div style="left:795.5px;top:225.07999999999998px;width:233.5px;height:13.93px;background:#fff;border-top:1px solid #f0f0f0"></div>
<div style="left:797.5px;top:225.38px;height:13.93px;line-height:13.93px;font-size:8.6px;letter-spacing:-0.3px;color:#1a1a1a">6</div>
<div style="left:848.5px;top:225.38px;height:13.93px;line-height:13.93px;font-size:8.6px;letter-spacing:-0.3px;color:#1a1a1a">86</div>
<div style="left:900.2px;top:225.38px;height:13.93px;line-height:13.93px;font-size:8.6px;letter-spacing:-0.3px;color:#1a1a1a">1</div>
<div style="left:951px;top:225.38px;width:76.8px;height:13.93px;line-height:13.93px;font-size:8.6px;letter-spacing:-0.3px;color:#1a1a1a;text-align:right">0.00466</div>
<div style="left:795.5px;top:239.01px;width:233.5px;height:13.93px;background:#f7f7f7;border-top:1px solid #f0f0f0"></div>
<div style="left:797.5px;top:239.31px;height:13.93px;line-height:13.93px;font-size:8.6px;letter-spacing:-0.3px;color:#1a1a1a">7</div>
<div style="left:848.5px;top:239.31px;height:13.93px;line-height:13.93px;font-size:8.6px;letter-spacing:-0.3px;color:#1a1a1a">87</div>
<div style="left:900.2px;top:239.31px;height:13.93px;line-height:13.93px;font-size:8.6px;letter-spacing:-0.3px;color:#1a1a1a">2</div>
<div style="left:951px;top:239.31px;width:76.8px;height:13.93px;line-height:13.93px;font-size:8.6px;letter-spacing:-0.3px;color:#1a1a1a;text-align:right">0.00665</div>
<div style="left:795.5px;top:252.94px;width:233.5px;height:13.93px;background:#fff;border-top:1px solid #f0f0f0"></div>
<div style="left:797.5px;top:253.24px;height:13.93px;line-height:13.93px;font-size:8.6px;letter-spacing:-0.3px;color:#1a1a1a">8</div>
<div style="left:848.5px;top:253.24px;height:13.93px;line-height:13.93px;font-size:8.6px;letter-spacing:-0.3px;color:#1a1a1a">88</div>
<div style="left:900.2px;top:253.24px;height:13.93px;line-height:13.93px;font-size:8.6px;letter-spacing:-0.3px;color:#1a1a1a">7</div>
<div style="left:951px;top:253.24px;width:76.8px;height:13.93px;line-height:13.93px;font-size:8.6px;letter-spacing:-0.3px;color:#1a1a1a;text-align:right">0.00925</div>
<div style="left:795.5px;top:266.87px;width:233.5px;height:13.93px;background:#f7f7f7;border-top:1px solid #f0f0f0"></div>
<div style="left:797.5px;top:267.17px;height:13.93px;line-height:13.93px;font-size:8.6px;letter-spacing:-0.3px;color:#1a1a1a">9</div>
<div style="left:848.5px;top:267.17px;height:13.93px;line-height:13.93px;font-size:8.6px;letter-spacing:-0.3px;color:#1a1a1a">89</div>
<div style="left:900.2px;top:267.17px;height:13.93px;line-height:13.93px;font-size:8.6px;letter-spacing:-0.3px;color:#1a1a1a">7</div>
<div style="left:951px;top:267.17px;width:76.8px;height:13.93px;line-height:13.93px;font-size:8.6px;letter-spacing:-0.3px;color:#1a1a1a;text-align:right">0.01253</div>
<div style="left:795.5px;top:280.8px;width:233.5px;height:13.93px;background:#fff;border-top:1px solid #f0f0f0"></div>
<div style="left:797.5px;top:281.1px;height:13.93px;line-height:13.93px;font-size:8.6px;letter-spacing:-0.3px;color:#1a1a1a">10</div>
<div style="left:848.5px;top:281.1px;height:13.93px;line-height:13.93px;font-size:8.6px;letter-spacing:-0.3px;color:#1a1a1a">90</div>
<div style="left:900.2px;top:281.1px;height:13.93px;line-height:13.93px;font-size:8.6px;letter-spacing:-0.3px;color:#1a1a1a">12</div>
<div style="left:951px;top:281.1px;width:76.8px;height:13.93px;line-height:13.93px;font-size:8.6px;letter-spacing:-0.3px;color:#1a1a1a;text-align:right">0.01654</div>
<div style="left:795.5px;top:294.73px;width:233.5px;height:13.93px;background:#f7f7f7;border-top:1px solid #f0f0f0"></div>
<div style="left:797.5px;top:295.03000000000003px;height:13.93px;line-height:13.93px;font-size:8.6px;letter-spacing:-0.3px;color:#1a1a1a">11</div>
<div style="left:848.5px;top:295.03000000000003px;height:13.93px;line-height:13.93px;font-size:8.6px;letter-spacing:-0.3px;color:#1a1a1a">91</div>
<div style="left:900.2px;top:295.03000000000003px;height:13.93px;line-height:13.93px;font-size:8.6px;letter-spacing:-0.3px;color:#1a1a1a">10</div>
<div style="left:951px;top:295.03000000000003px;width:76.8px;height:13.93px;line-height:13.93px;font-size:8.6px;letter-spacing:-0.3px;color:#1a1a1a;text-align:right">0.02128</div>
<div style="left:795.5px;top:308.65999999999997px;width:233.5px;height:13.93px;background:#fff;border-top:1px solid #f0f0f0"></div>
<div style="left:797.5px;top:308.96px;height:13.93px;line-height:13.93px;font-size:8.6px;letter-spacing:-0.3px;color:#1a1a1a">12</div>
<div style="left:848.5px;top:308.96px;height:13.93px;line-height:13.93px;font-size:8.6px;letter-spacing:-0.3px;color:#1a1a1a">92</div>
<div style="left:900.2px;top:308.96px;height:13.93px;line-height:13.93px;font-size:8.6px;letter-spacing:-0.3px;color:#1a1a1a">14</div>
<div style="left:951px;top:308.96px;width:76.8px;height:13.93px;line-height:13.93px;font-size:8.6px;letter-spacing:-0.3px;color:#1a1a1a;text-align:right">0.02668</div>
<div style="left:795.5px;top:322.59000000000003px;width:233.5px;height:13.93px;background:#f7f7f7;border-top:1px solid #f0f0f0"></div>
<div style="left:797.5px;top:322.89000000000004px;height:13.93px;line-height:13.93px;font-size:8.6px;letter-spacing:-0.3px;color:#1a1a1a">13</div>
<div style="left:848.5px;top:322.89000000000004px;height:13.93px;line-height:13.93px;font-size:8.6px;letter-spacing:-0.3px;color:#1a1a1a">93</div>
<div style="left:900.2px;top:322.89000000000004px;height:13.93px;line-height:13.93px;font-size:8.6px;letter-spacing:-0.3px;color:#1a1a1a">17</div>
<div style="left:951px;top:322.89000000000004px;width:76.8px;height:13.93px;line-height:13.93px;font-size:8.6px;letter-spacing:-0.3px;color:#1a1a1a;text-align:right">0.03260</div>
<div style="left:795.5px;top:336.52px;width:233.5px;height:13.93px;background:#fff;border-top:1px solid #f0f0f0"></div>
<div style="left:797.5px;top:336.82px;height:13.93px;line-height:13.93px;font-size:8.6px;letter-spacing:-0.3px;color:#1a1a1a">14</div>
<div style="left:848.5px;top:336.82px;height:13.93px;line-height:13.93px;font-size:8.6px;letter-spacing:-0.3px;color:#1a1a1a">94</div>
<div style="left:900.2px;top:336.82px;height:13.93px;line-height:13.93px;font-size:8.6px;letter-spacing:-0.3px;color:#1a1a1a">23</div>
<div style="left:951px;top:336.82px;width:76.8px;height:13.93px;line-height:13.93px;font-size:8.6px;letter-spacing:-0.3px;color:#1a1a1a;text-align:right">0.03881</div>
<div style="left:795.5px;top:350.45px;width:233.5px;height:13.93px;background:#f7f7f7;border-top:1px solid #f0f0f0"></div>
<div style="left:797.5px;top:350.75px;height:13.93px;line-height:13.93px;font-size:8.6px;letter-spacing:-0.3px;color:#1a1a1a">15</div>
<div style="left:848.5px;top:350.75px;height:13.93px;line-height:13.93px;font-size:8.6px;letter-spacing:-0.3px;color:#1a1a1a">95</div>
<div style="left:900.2px;top:350.75px;height:13.93px;line-height:13.93px;font-size:8.6px;letter-spacing:-0.3px;color:#1a1a1a">24</div>
<div style="left:951px;top:350.75px;width:76.8px;height:13.93px;line-height:13.93px;font-size:8.6px;letter-spacing:-0.3px;color:#1a1a1a;text-align:right">0.04502</div>
<div style="left:795.5px;top:364.38px;width:233.5px;height:13.93px;background:#fff;border-top:1px solid #f0f0f0"></div>
<div style="left:797.5px;top:364.68px;height:13.93px;line-height:13.93px;font-size:8.6px;letter-spacing:-0.3px;color:#1a1a1a">16</div>
<div style="left:848.5px;top:364.68px;height:13.93px;line-height:13.93px;font-size:8.6px;letter-spacing:-0.3px;color:#1a1a1a">96</div>
<div style="left:900.2px;top:364.68px;height:13.93px;line-height:13.93px;font-size:8.6px;letter-spacing:-0.3px;color:#1a1a1a">26</div>
<div style="left:951px;top:364.68px;width:76.8px;height:13.93px;line-height:13.93px;font-size:8.6px;letter-spacing:-0.3px;color:#1a1a1a;text-align:right">0.05089</div>
<div style="left:795.5px;top:378.31px;width:233.5px;height:13.93px;background:#f7f7f7;border-top:1px solid #f0f0f0"></div>
<div style="left:797.5px;top:378.61px;height:13.93px;line-height:13.93px;font-size:8.6px;letter-spacing:-0.3px;color:#1a1a1a">17</div>
<div style="left:848.5px;top:378.61px;height:13.93px;line-height:13.93px;font-size:8.6px;letter-spacing:-0.3px;color:#1a1a1a">97</div>
<div style="left:900.2px;top:378.61px;height:13.93px;line-height:13.93px;font-size:8.6px;letter-spacing:-0.3px;color:#1a1a1a">33</div>
<div style="left:951px;top:378.61px;width:76.8px;height:13.93px;line-height:13.93px;font-size:8.6px;letter-spacing:-0.3px;color:#1a1a1a;text-align:right">0.05605</div>
<div style="left:795.5px;top:392.24px;width:233.5px;height:13.93px;background:#fff;border-top:1px solid #f0f0f0"></div>
<div style="left:797.5px;top:392.54px;height:13.93px;line-height:13.93px;font-size:8.6px;letter-spacing:-0.3px;color:#1a1a1a">18</div>
<div style="left:848.5px;top:392.54px;height:13.93px;line-height:13.93px;font-size:8.6px;letter-spacing:-0.3px;color:#1a1a1a">98</div>
<div style="left:900.2px;top:392.54px;height:13.93px;line-height:13.93px;font-size:8.6px;letter-spacing:-0.3px;color:#1a1a1a">33</div>
<div style="left:951px;top:392.54px;width:76.8px;height:13.93px;line-height:13.93px;font-size:8.6px;letter-spacing:-0.3px;color:#1a1a1a;text-align:right">0.06016</div>
<div style="left:795.5px;top:406.17px;width:233.5px;height:13.93px;background:#f7f7f7;border-top:1px solid #f0f0f0"></div>
<div style="left:797.5px;top:406.47px;height:13.93px;line-height:13.93px;font-size:8.6px;letter-spacing:-0.3px;color:#1a1a1a">19</div>
<div style="left:848.5px;top:406.47px;height:13.93px;line-height:13.93px;font-size:8.6px;letter-spacing:-0.3px;color:#1a1a1a">99</div>
<div style="left:900.2px;top:406.47px;height:13.93px;line-height:13.93px;font-size:8.6px;letter-spacing:-0.3px;color:#1a1a1a">27</div>
<div style="left:951px;top:406.47px;width:76.8px;height:13.93px;line-height:13.93px;font-size:8.6px;letter-spacing:-0.3px;color:#1a1a1a;text-align:right">0.06293</div>
<div style="left:795.5px;top:420.1px;width:233.5px;height:13.93px;background:#fff;border-top:1px solid #f0f0f0"></div>
<div style="left:797.5px;top:420.40000000000003px;height:13.93px;line-height:13.93px;font-size:8.6px;letter-spacing:-0.3px;color:#1a1a1a">20</div>
<div style="left:848.5px;top:420.40000000000003px;height:13.93px;line-height:13.93px;font-size:8.6px;letter-spacing:-0.3px;color:#1a1a1a">100</div>
<div style="left:900.2px;top:420.40000000000003px;height:13.93px;line-height:13.93px;font-size:8.6px;letter-spacing:-0.3px;color:#1a1a1a">27</div>
<div style="left:951px;top:420.40000000000003px;width:76.8px;height:13.93px;line-height:13.93px;font-size:8.6px;letter-spacing:-0.3px;color:#1a1a1a;text-align:right">0.06413</div>
<div style="left:795.5px;top:434.03px;width:233.5px;height:13.93px;background:#f7f7f7;border-top:1px solid #f0f0f0"></div>
<div style="left:797.5px;top:434.33px;height:13.93px;line-height:13.93px;font-size:8.6px;letter-spacing:-0.3px;color:#1a1a1a">21</div>
<div style="left:848.5px;top:434.33px;height:13.93px;line-height:13.93px;font-size:8.6px;letter-spacing:-0.3px;color:#1a1a1a">101</div>
<div style="left:900.2px;top:434.33px;height:13.93px;line-height:13.93px;font-size:8.6px;letter-spacing:-0.3px;color:#1a1a1a">28</div>
<div style="left:951px;top:434.33px;width:76.8px;height:13.93px;line-height:13.93px;font-size:8.6px;letter-spacing:-0.3px;color:#1a1a1a;text-align:right">0.06370</div>
<div style="left:795.5px;top:447.96px;width:233.5px;height:13.93px;background:#fff;border-top:1px solid #f0f0f0"></div>
<div style="left:797.5px;top:448.26px;height:13.93px;line-height:13.93px;font-size:8.6px;letter-spacing:-0.3px;color:#1a1a1a">22</div>
<div style="left:848.5px;top:448.26px;height:13.93px;line-height:13.93px;font-size:8.6px;letter-spacing:-0.3px;color:#1a1a1a">102</div>
<div style="left:900.2px;top:448.26px;height:13.93px;line-height:13.93px;font-size:8.6px;letter-spacing:-0.3px;color:#1a1a1a">41</div>
<div style="left:951px;top:448.26px;width:76.8px;height:13.93px;line-height:13.93px;font-size:8.6px;letter-spacing:-0.3px;color:#1a1a1a;text-align:right">0.06164</div>
<div style="left:795.5px;top:461.89px;width:233.5px;height:13.93px;background:#f7f7f7;border-top:1px solid #f0f0f0"></div>
<div style="left:797.5px;top:462.19px;height:13.93px;line-height:13.93px;font-size:8.6px;letter-spacing:-0.3px;color:#1a1a1a">23</div>
<div style="left:848.5px;top:462.19px;height:13.93px;line-height:13.93px;font-size:8.6px;letter-spacing:-0.3px;color:#1a1a1a">103</div>
<div style="left:900.2px;top:462.19px;height:13.93px;line-height:13.93px;font-size:8.6px;letter-spacing:-0.3px;color:#1a1a1a">29</div>
<div style="left:951px;top:462.19px;width:76.8px;height:13.93px;line-height:13.93px;font-size:8.6px;letter-spacing:-0.3px;color:#1a1a1a;text-align:right">0.05814</div>
<div style="left:795.5px;top:475.82px;width:233.5px;height:13.93px;background:#fff;border-top:1px solid #f0f0f0"></div>
<div style="left:797.5px;top:476.12px;height:13.93px;line-height:13.93px;font-size:8.6px;letter-spacing:-0.3px;color:#1a1a1a">24</div>
<div style="left:848.5px;top:476.12px;height:13.93px;line-height:13.93px;font-size:8.6px;letter-spacing:-0.3px;color:#1a1a1a">104</div>
<div style="left:900.2px;top:476.12px;height:13.93px;line-height:13.93px;font-size:8.6px;letter-spacing:-0.3px;color:#1a1a1a">35</div>
<div style="left:951px;top:476.12px;width:76.8px;height:13.93px;line-height:13.93px;font-size:8.6px;letter-spacing:-0.3px;color:#1a1a1a;text-align:right">0.05343</div>
<div style="left:1124.5px;top:126px;width:11px;height:16px;background:linear-gradient(#f0f0f0,#dadada)"></div>
<div style="left:1124.5px;top:142px;width:11px;height:344px;background:linear-gradient(90deg,#e4e4e4,#f4f4f4)"></div>
<div style="left:1124.5px;top:142.3px;width:10px;height:9.3px;background:linear-gradient(#fafafa,#e0e0e0);border:1px solid #c4c4c4;border-radius:1px"><svg width="8" height="8" style="position:absolute;left:0;top:0"><path d="M2 5.2L4 3L6 5.2Z" fill="#666"/></svg></div>
<div style="left:1124.5px;top:152px;width:10px;height:195.5px;background:linear-gradient(90deg,#f8f8f8,#e2e2e2);border:1px solid #c4c4c4;border-radius:2px"><svg width="8" height="6" style="position:absolute;left:0;top:94px"><path d="M2 1H6M2 2.5H6M2 4H6" stroke="#888" stroke-width="0.7"/></svg></div>
<div style="left:1124.5px;top:476px;width:10px;height:9.5px;background:linear-gradient(#fafafa,#e0e0e0);border:1px solid #c4c4c4;border-radius:1px"><svg width="8" height="8" style="position:absolute;left:0;top:0"><path d="M2 3L4 5.2L6 3Z" fill="#666"/></svg></div>
<div style="left:795px;top:486px;width:341px;height:1px;background:#d8d8d8"></div>
<div style="left:3.5px;top:488.2px;width:51.5px;height:15.3px;background:linear-gradient(#eef4fc,#c7dbf6);border:1px solid #c2d3ea;border-bottom:none;border-radius:4px 4px 0 0;color:#1e1e1e"><div style="left:0;top:0;width:49.5px;height:15.3px;line-height:13.3px;text-align:center;font-size:8.5px">控制图判读</div></div>
<div style="left:56.5px;top:488.2px;width:51.5px;height:15.3px;background:linear-gradient(#fbfdff,#f2f7fe);border:1px solid #c2d3ea;border-bottom:none;border-radius:4px 4px 0 0;color:#3d5f9a"><div style="left:0;top:0;width:49.5px;height:15.3px;line-height:13.3px;text-align:center;font-size:8.5px"><span style="color:#4a7fd2">样本数据</span></div></div>
<div style="left:2px;top:503.3px;width:1134px;height:15.7px;background:linear-gradient(#f4f4f4,#e2e2e2 70%,#d8d8d8);"></div>
<div style="left:65px;top:504.3px;width:1px;height:14px;background:#d0d0d0"></div>
<div style="left:66px;top:504.3px;width:1px;height:14px;background:#f8f8f8"></div>
<div style="left:3.8px;top:503.3px;height:15.7px;line-height:15.7px;font-size:8px;color:#222">检验时间</div>
<div style="left:90.5px;top:504.3px;width:1px;height:14px;background:#d0d0d0"></div>
<div style="left:91.5px;top:504.3px;width:1px;height:14px;background:#f8f8f8"></div>
<div style="left:68.6px;top:503.3px;height:15.7px;line-height:15.7px;font-size:8px;color:#222">N</div>
<div style="left:142.5px;top:504.3px;width:1px;height:14px;background:#d0d0d0"></div>
<div style="left:143.5px;top:504.3px;width:1px;height:14px;background:#f8f8f8"></div>
<div style="left:94.1px;top:503.3px;height:15.7px;line-height:15.7px;font-size:8px;color:#222">品名</div>
<div style="left:207.2px;top:504.3px;width:1px;height:14px;background:#d0d0d0"></div>
<div style="left:208.2px;top:504.3px;width:1px;height:14px;background:#f8f8f8"></div>
<div style="left:146.1px;top:503.3px;height:15.7px;line-height:15.7px;font-size:8px;color:#222">工单</div>
<div style="left:245.9px;top:504.3px;width:1px;height:14px;background:#d0d0d0"></div>
<div style="left:246.9px;top:504.3px;width:1px;height:14px;background:#f8f8f8"></div>
<div style="left:210.79999999999998px;top:503.3px;height:15.7px;line-height:15.7px;font-size:8px;color:#222">班次</div>
<div style="left:284.79px;top:504.3px;width:1px;height:14px;background:#d0d0d0"></div>
<div style="left:285.79px;top:504.3px;width:1px;height:14px;background:#f8f8f8"></div>
<div style="left:246.9px;top:503.3px;width:26.390000000000015px;height:15.7px;line-height:15.7px;font-size:8px;color:#222;text-align:right">1</div>
<div style="left:323.69px;top:504.3px;width:1px;height:14px;background:#d0d0d0"></div>
<div style="left:324.69px;top:504.3px;width:1px;height:14px;background:#f8f8f8"></div>
<div style="left:285.79px;top:503.3px;width:26.399999999999977px;height:15.7px;line-height:15.7px;font-size:8px;color:#222;text-align:right">2</div>
<div style="left:362.58px;top:504.3px;width:1px;height:14px;background:#d0d0d0"></div>
<div style="left:363.58px;top:504.3px;width:1px;height:14px;background:#f8f8f8"></div>
<div style="left:324.69px;top:503.3px;width:26.389999999999986px;height:15.7px;line-height:15.7px;font-size:8px;color:#222;text-align:right">3</div>
<div style="left:401.48px;top:504.3px;width:1px;height:14px;background:#d0d0d0"></div>
<div style="left:402.48px;top:504.3px;width:1px;height:14px;background:#f8f8f8"></div>
<div style="left:363.58px;top:503.3px;width:26.400000000000034px;height:15.7px;line-height:15.7px;font-size:8px;color:#222;text-align:right">4</div>
<div style="left:440.37px;top:504.3px;width:1px;height:14px;background:#d0d0d0"></div>
<div style="left:441.37px;top:504.3px;width:1px;height:14px;background:#f8f8f8"></div>
<div style="left:402.48px;top:503.3px;width:26.389999999999986px;height:15.7px;line-height:15.7px;font-size:8px;color:#222;text-align:right">5</div>
<div style="left:479.26px;top:504.3px;width:1px;height:14px;background:#d0d0d0"></div>
<div style="left:480.26px;top:504.3px;width:1px;height:14px;background:#f8f8f8"></div>
<div style="left:441.37px;top:503.3px;width:26.389999999999986px;height:15.7px;line-height:15.7px;font-size:8px;color:#222;text-align:right">6</div>
<div style="left:518.16px;top:504.3px;width:1px;height:14px;background:#d0d0d0"></div>
<div style="left:519.16px;top:504.3px;width:1px;height:14px;background:#f8f8f8"></div>
<div style="left:480.26px;top:503.3px;width:26.399999999999977px;height:15.7px;line-height:15.7px;font-size:8px;color:#222;text-align:right">7</div>
<div style="left:557.05px;top:504.3px;width:1px;height:14px;background:#d0d0d0"></div>
<div style="left:558.05px;top:504.3px;width:1px;height:14px;background:#f8f8f8"></div>
<div style="left:519.16px;top:503.3px;width:26.389999999999986px;height:15.7px;line-height:15.7px;font-size:8px;color:#222;text-align:right">8</div>
<div style="left:595.95px;top:504.3px;width:1px;height:14px;background:#d0d0d0"></div>
<div style="left:596.95px;top:504.3px;width:1px;height:14px;background:#f8f8f8"></div>
<div style="left:558.05px;top:503.3px;width:26.40000000000009px;height:15.7px;line-height:15.7px;font-size:8px;color:#222;text-align:right">9</div>
<div style="left:634.84px;top:504.3px;width:1px;height:14px;background:#d0d0d0"></div>
<div style="left:635.84px;top:504.3px;width:1px;height:14px;background:#f8f8f8"></div>
<div style="left:596.95px;top:503.3px;width:26.389999999999986px;height:15.7px;line-height:15.7px;font-size:8px;color:#222;text-align:right">10</div>
<div style="left:673.73px;top:504.3px;width:1px;height:14px;background:#d0d0d0"></div>
<div style="left:674.73px;top:504.3px;width:1px;height:14px;background:#f8f8f8"></div>
<div style="left:635.84px;top:503.3px;width:26.389999999999986px;height:15.7px;line-height:15.7px;font-size:8px;color:#222;text-align:right">11</div>
<div style="left:712.63px;top:504.3px;width:1px;height:14px;background:#d0d0d0"></div>
<div style="left:713.63px;top:504.3px;width:1px;height:14px;background:#f8f8f8"></div>
<div style="left:674.73px;top:503.3px;width:26.399999999999977px;height:15.7px;line-height:15.7px;font-size:8px;color:#222;text-align:right">12</div>
<div style="left:751.52px;top:504.3px;width:1px;height:14px;background:#d0d0d0"></div>
<div style="left:752.52px;top:504.3px;width:1px;height:14px;background:#f8f8f8"></div>
<div style="left:713.63px;top:503.3px;width:26.389999999999986px;height:15.7px;line-height:15.7px;font-size:8px;color:#222;text-align:right">13</div>
<div style="left:790.42px;top:504.3px;width:1px;height:14px;background:#d0d0d0"></div>
<div style="left:791.42px;top:504.3px;width:1px;height:14px;background:#f8f8f8"></div>
<div style="left:752.52px;top:503.3px;width:26.399999999999977px;height:15.7px;line-height:15.7px;font-size:8px;color:#222;text-align:right">14</div>
<div style="left:829.31px;top:504.3px;width:1px;height:14px;background:#d0d0d0"></div>
<div style="left:830.31px;top:504.3px;width:1px;height:14px;background:#f8f8f8"></div>
<div style="left:791.42px;top:503.3px;width:26.389999999999986px;height:15.7px;line-height:15.7px;font-size:8px;color:#222;text-align:right">15</div>
<div style="left:868.2px;top:504.3px;width:1px;height:14px;background:#d0d0d0"></div>
<div style="left:869.2px;top:504.3px;width:1px;height:14px;background:#f8f8f8"></div>
<div style="left:830.31px;top:503.3px;width:26.3900000000001px;height:15.7px;line-height:15.7px;font-size:8px;color:#222;text-align:right">16</div>
<div style="left:907.1px;top:504.3px;width:1px;height:14px;background:#d0d0d0"></div>
<div style="left:908.1px;top:504.3px;width:1px;height:14px;background:#f8f8f8"></div>
<div style="left:869.2px;top:503.3px;width:26.399999999999977px;height:15.7px;line-height:15.7px;font-size:8px;color:#222;text-align:right">17</div>
<div style="left:945.99px;top:504.3px;width:1px;height:14px;background:#d0d0d0"></div>
<div style="left:946.99px;top:504.3px;width:1px;height:14px;background:#f8f8f8"></div>
<div style="left:908.1px;top:503.3px;width:26.389999999999986px;height:15.7px;line-height:15.7px;font-size:8px;color:#222;text-align:right">18</div>
<div style="left:980.9px;top:504.3px;width:1px;height:14px;background:#d0d0d0"></div>
<div style="left:981.9px;top:504.3px;width:1px;height:14px;background:#f8f8f8"></div>
<div style="left:949.59px;top:503.3px;height:15.7px;line-height:15.7px;font-size:8px;color:#222">最大值</div>
<div style="left:1016px;top:504.3px;width:1px;height:14px;background:#d0d0d0"></div>
<div style="left:1017px;top:504.3px;width:1px;height:14px;background:#f8f8f8"></div>
<div style="left:984.5px;top:503.3px;height:15.7px;line-height:15.7px;font-size:8px;color:#222">最小值</div>
<div style="left:1051px;top:504.3px;width:1px;height:14px;background:#d0d0d0"></div>
<div style="left:1052px;top:504.3px;width:1px;height:14px;background:#f8f8f8"></div>
<div style="left:1019.6px;top:503.3px;height:15.7px;line-height:15.7px;font-size:8px;color:#222">平均值</div>
<div style="left:1085.7px;top:504.3px;width:1px;height:14px;background:#d0d0d0"></div>
<div style="left:1086.7px;top:504.3px;width:1px;height:14px;background:#f8f8f8"></div>
<div style="left:1054.6px;top:503.3px;height:15.7px;line-height:15.7px;font-size:8px;color:#222">标准差</div>
<div style="left:1123.6px;top:504.3px;width:1px;height:14px;background:#d0d0d0"></div>
<div style="left:1124.6px;top:504.3px;width:1px;height:14px;background:#f8f8f8"></div>
<div style="left:1089.3px;top:503.3px;height:15.7px;line-height:15.7px;font-size:8px;color:#222">X1</div>
<div style="left:2px;top:519px;width:1122.6px;height:129.5px;overflow:hidden">
<div style="left:0;top:0.0px;width:1122.6px;height:13.93px;background:#f5c4c4;font-size:9px;color:#1a1a1a;letter-spacing:0.05px;"><div style="left:0.7px;top:1.5px;width:63.3px;height:12.43px;line-height:13.93px;overflow:hidden">2021-10-01 0...</div><div style="left:65.0px;top:1.5px;width:24.5px;height:12.43px;line-height:13.93px;overflow:hidden">1</div><div style="left:91.4px;top:1.5px;width:50.1px;height:12.43px;line-height:13.93px;overflow:hidden">TEST_PN1</div><div style="left:143.4px;top:1.5px;width:62.79999999999999px;height:12.43px;line-height:13.93px;overflow:hidden">W0-002-003</div><div style="left:208.1px;top:1.5px;width:36.80000000000002px;height:12.43px;line-height:13.93px;overflow:hidden">A</div><div style="left:244.9px;top:1.5px;width:37.890000000000015px;height:12.43px;line-height:13.93px;text-align:right;overflow:hidden">106.36...</div><div style="left:283.79px;top:1.5px;width:37.89999999999998px;height:12.43px;line-height:13.93px;text-align:right;overflow:hidden">109.28...</div><div style="left:322.69px;top:1.5px;width:37.889999999999986px;height:12.43px;line-height:13.93px;text-align:right;overflow:hidden">107.50...</div><div style="left:361.58px;top:1.5px;width:37.900000000000034px;height:12.43px;line-height:13.93px;text-align:right;overflow:hidden">113.34...</div><div style="left:400.48px;top:1.5px;width:37.889999999999986px;height:12.43px;line-height:13.93px;text-align:right;overflow:hidden">105.87...</div><div style="left:439.37px;top:1.5px;width:37.889999999999986px;height:12.43px;line-height:13.93px;text-align:right;overflow:hidden">90.8899</div><div style="left:478.26px;top:1.5px;width:37.89999999999998px;height:12.43px;line-height:13.93px;text-align:right;overflow:hidden">95.3007</div><div style="left:517.16px;top:1.5px;width:37.889999999999986px;height:12.43px;line-height:13.93px;text-align:right;overflow:hidden">101.82...</div><div style="left:556.05px;top:1.5px;width:37.90000000000009px;height:12.43px;line-height:13.93px;text-align:right;overflow:hidden">93.2517</div><div style="left:594.95px;top:1.5px;width:37.889999999999986px;height:12.43px;line-height:13.93px;text-align:right;overflow:hidden">96.9013</div><div style="left:633.84px;top:1.5px;width:37.889999999999986px;height:12.43px;line-height:13.93px;text-align:right;overflow:hidden">99.9427</div><div style="left:672.73px;top:1.5px;width:37.89999999999998px;height:12.43px;line-height:13.93px;text-align:right;overflow:hidden">98.8843</div><div style="left:711.63px;top:1.5px;width:37.889999999999986px;height:12.43px;line-height:13.93px;text-align:right;overflow:hidden">100.43...</div><div style="left:750.52px;top:1.5px;width:37.89999999999998px;height:12.43px;line-height:13.93px;text-align:right;overflow:hidden">103.58...</div><div style="left:789.42px;top:1.5px;width:37.889999999999986px;height:12.43px;line-height:13.93px;text-align:right;overflow:hidden">96.1831</div><div style="left:828.31px;top:1.5px;width:37.8900000000001px;height:12.43px;line-height:13.93px;text-align:right;overflow:hidden">102.51...</div><div style="left:867.2px;top:1.5px;width:37.89999999999998px;height:12.43px;line-height:13.93px;text-align:right;overflow:hidden">100.27...</div><div style="left:906.1px;top:1.5px;width:37.889999999999986px;height:12.43px;line-height:13.93px;text-align:right;overflow:hidden">108.13...</div><div style="left:946.89px;top:1.5px;width:33.00999999999997px;height:12.43px;line-height:13.93px;overflow:hidden">113.3...</div><div style="left:981.8px;top:1.5px;width:33.200000000000024px;height:12.43px;line-height:13.93px;overflow:hidden">90.88...</div><div style="left:1016.9px;top:1.5px;width:33.1px;height:12.43px;line-height:13.93px;overflow:hidden">101.6...</div><div style="left:1051.9px;top:1.5px;width:32.80000000000005px;height:12.43px;line-height:13.93px;overflow:hidden">5.9849</div><div style="left:1086.6000000000001px;top:1.5px;width:35.999999999999865px;height:12.43px;line-height:13.93px;overflow:hidden">0.0000</div></div>
<div style="left:0;top:13.93px;width:1122.6px;height:13.93px;background:#f5c4c4;font-size:9px;color:#1a1a1a;letter-spacing:0.05px;"><div style="left:0.7px;top:1.5px;width:63.3px;height:12.43px;line-height:13.93px;overflow:hidden">2021-10-02 0...</div><div style="left:65.0px;top:1.5px;width:24.5px;height:12.43px;line-height:13.93px;overflow:hidden">2</div><div style="left:91.4px;top:1.5px;width:50.1px;height:12.43px;line-height:13.93px;overflow:hidden">TEST_PN2</div><div style="left:143.4px;top:1.5px;width:62.79999999999999px;height:12.43px;line-height:13.93px;overflow:hidden">W0-002-004</div><div style="left:208.1px;top:1.5px;width:36.80000000000002px;height:12.43px;line-height:13.93px;overflow:hidden">A</div><div style="left:244.9px;top:1.5px;width:37.890000000000015px;height:12.43px;line-height:13.93px;text-align:right;overflow:hidden">100.97...</div><div style="left:283.79px;top:1.5px;width:37.89999999999998px;height:12.43px;line-height:13.93px;text-align:right;overflow:hidden">100.33...</div><div style="left:322.69px;top:1.5px;width:37.889999999999986px;height:12.43px;line-height:13.93px;text-align:right;overflow:hidden">95.6965</div><div style="left:361.58px;top:1.5px;width:37.900000000000034px;height:12.43px;line-height:13.93px;text-align:right;overflow:hidden">106.29...</div><div style="left:400.48px;top:1.5px;width:37.889999999999986px;height:12.43px;line-height:13.93px;text-align:right;overflow:hidden">100.17...</div><div style="left:439.37px;top:1.5px;width:37.889999999999986px;height:12.43px;line-height:13.93px;text-align:right;overflow:hidden">88.3376</div><div style="left:478.26px;top:1.5px;width:37.89999999999998px;height:12.43px;line-height:13.93px;text-align:right;overflow:hidden">101.29...</div><div style="left:517.16px;top:1.5px;width:37.889999999999986px;height:12.43px;line-height:13.93px;text-align:right;overflow:hidden">106.22...</div><div style="left:556.05px;top:1.5px;width:37.90000000000009px;height:12.43px;line-height:13.93px;text-align:right;overflow:hidden">103.07...</div><div style="left:594.95px;top:1.5px;width:37.889999999999986px;height:12.43px;line-height:13.93px;text-align:right;overflow:hidden">94.8968</div><div style="left:633.84px;top:1.5px;width:37.889999999999986px;height:12.43px;line-height:13.93px;text-align:right;overflow:hidden">100.58...</div><div style="left:672.73px;top:1.5px;width:37.89999999999998px;height:12.43px;line-height:13.93px;text-align:right;overflow:hidden">96.6517</div><div style="left:711.63px;top:1.5px;width:37.889999999999986px;height:12.43px;line-height:13.93px;text-align:right;overflow:hidden">104.35...</div><div style="left:750.52px;top:1.5px;width:37.89999999999998px;height:12.43px;line-height:13.93px;text-align:right;overflow:hidden">103.87...</div><div style="left:789.42px;top:1.5px;width:37.889999999999986px;height:12.43px;line-height:13.93px;text-align:right;overflow:hidden">103.33...</div><div style="left:828.31px;top:1.5px;width:37.8900000000001px;height:12.43px;line-height:13.93px;text-align:right;overflow:hidden">101.04...</div><div style="left:867.2px;top:1.5px;width:37.89999999999998px;height:12.43px;line-height:13.93px;text-align:right;overflow:hidden">103.30...</div><div style="left:906.1px;top:1.5px;width:37.889999999999986px;height:12.43px;line-height:13.93px;text-align:right;overflow:hidden">106.74...</div><div style="left:946.89px;top:1.5px;width:33.00999999999997px;height:12.43px;line-height:13.93px;overflow:hidden">106.7...</div><div style="left:981.8px;top:1.5px;width:33.200000000000024px;height:12.43px;line-height:13.93px;overflow:hidden">88.33...</div><div style="left:1016.9px;top:1.5px;width:33.1px;height:12.43px;line-height:13.93px;overflow:hidden">100.9...</div><div style="left:1051.9px;top:1.5px;width:32.80000000000005px;height:12.43px;line-height:13.93px;overflow:hidden">4.6579</div><div style="left:1086.6000000000001px;top:1.5px;width:35.999999999999865px;height:12.43px;line-height:13.93px;overflow:hidden">0.0000</div></div>
<div style="left:0;top:27.86px;width:1122.6px;height:13.93px;background:#fff;font-size:8.3px;color:#1a1a1a;letter-spacing:-0.3px;"><div style="left:0.7px;top:0.8px;width:63.3px;height:13.129999999999999px;line-height:13.93px;overflow:hidden">2021-10-03 00:00</div><div style="left:65.0px;top:0.8px;width:24.5px;height:13.129999999999999px;line-height:13.93px;overflow:hidden">3</div><div style="left:91.4px;top:0.8px;width:50.1px;height:13.129999999999999px;line-height:13.93px;overflow:hidden">TEST_PN3</div><div style="left:143.4px;top:0.8px;width:62.79999999999999px;height:13.129999999999999px;line-height:13.93px;overflow:hidden">W0-002-005</div><div style="left:208.1px;top:0.8px;width:36.80000000000002px;height:13.129999999999999px;line-height:13.93px;overflow:hidden">A</div><div style="left:244.9px;top:0.8px;width:37.890000000000015px;height:13.129999999999999px;line-height:13.93px;text-align:right;overflow:hidden">104.8792</div><div style="left:283.79px;top:0.8px;width:37.89999999999998px;height:13.129999999999999px;line-height:13.93px;text-align:right;overflow:hidden">97.8962</div><div style="left:322.69px;top:0.8px;width:37.889999999999986px;height:13.129999999999999px;line-height:13.93px;text-align:right;overflow:hidden">102.4368</div><div style="left:361.58px;top:0.8px;width:37.900000000000034px;height:13.129999999999999px;line-height:13.93px;text-align:right;overflow:hidden">103.7389</div><div style="left:400.48px;top:0.8px;width:37.889999999999986px;height:13.129999999999999px;line-height:13.93px;text-align:right;overflow:hidden">86.3345</div><div style="left:439.37px;top:0.8px;width:37.889999999999986px;height:13.129999999999999px;line-height:13.93px;text-align:right;overflow:hidden">97.0283</div><div style="left:478.26px;top:0.8px;width:37.89999999999998px;height:13.129999999999999px;line-height:13.93px;text-align:right;overflow:hidden">101.4125</div><div style="left:517.16px;top:0.8px;width:37.889999999999986px;height:13.129999999999999px;line-height:13.93px;text-align:right;overflow:hidden">94.5018</div><div style="left:556.05px;top:0.8px;width:37.90000000000009px;height:13.129999999999999px;line-height:13.93px;text-align:right;overflow:hidden">114.6318</div><div style="left:594.95px;top:0.8px;width:37.889999999999986px;height:13.129999999999999px;line-height:13.93px;text-align:right;overflow:hidden">88.4769</div><div style="left:633.84px;top:0.8px;width:37.889999999999986px;height:13.129999999999999px;line-height:13.93px;text-align:right;overflow:hidden">93.1910</div><div style="left:672.73px;top:0.8px;width:37.89999999999998px;height:13.129999999999999px;line-height:13.93px;text-align:right;overflow:hidden">98.7252</div><div style="left:711.63px;top:0.8px;width:37.889999999999986px;height:13.129999999999999px;line-height:13.93px;text-align:right;overflow:hidden">94.1164</div><div style="left:750.52px;top:0.8px;width:37.89999999999998px;height:13.129999999999999px;line-height:13.93px;text-align:right;overflow:hidden">105.2677</div><div style="left:789.42px;top:0.8px;width:37.889999999999986px;height:13.129999999999999px;line-height:13.93px;text-align:right;overflow:hidden">110.6366</div><div style="left:828.31px;top:0.8px;width:37.8900000000001px;height:13.129999999999999px;line-height:13.93px;text-align:right;overflow:hidden">105.0322</div><div style="left:867.2px;top:0.8px;width:37.89999999999998px;height:13.129999999999999px;line-height:13.93px;text-align:right;overflow:hidden">96.1293</div><div style="left:906.1px;top:0.8px;width:37.889999999999986px;height:13.129999999999999px;line-height:13.93px;text-align:right;overflow:hidden">92.2648</div><div style="left:946.89px;top:0.8px;width:33.00999999999997px;height:13.129999999999999px;line-height:13.93px;overflow:hidden">114.6318</div><div style="left:981.8px;top:0.8px;width:33.200000000000024px;height:13.129999999999999px;line-height:13.93px;overflow:hidden">86.3345</div><div style="left:1016.9px;top:0.8px;width:33.1px;height:13.129999999999999px;line-height:13.93px;overflow:hidden">99.2611</div><div style="left:1051.9px;top:0.8px;width:32.80000000000005px;height:13.129999999999999px;line-height:13.93px;overflow:hidden">7.4226</div><div style="left:1086.6000000000001px;top:0.8px;width:35.999999999999865px;height:13.129999999999999px;line-height:13.93px;overflow:hidden">0.0000</div></div>
<div style="left:0;top:41.79px;width:1122.6px;height:13.93px;background:#f5c4c4;font-size:9px;color:#1a1a1a;letter-spacing:0.05px;"><div style="left:0.7px;top:1.5px;width:63.3px;height:12.43px;line-height:13.93px;overflow:hidden">2021-10-04 0...</div><div style="left:65.0px;top:1.5px;width:24.5px;height:12.43px;line-height:13.93px;overflow:hidden">4</div><div style="left:91.4px;top:1.5px;width:50.1px;height:12.43px;line-height:13.93px;overflow:hidden">TEST_PN4</div><div style="left:143.4px;top:1.5px;width:62.79999999999999px;height:12.43px;line-height:13.93px;overflow:hidden">W0-002-006</div><div style="left:208.1px;top:1.5px;width:36.80000000000002px;height:12.43px;line-height:13.93px;overflow:hidden">A</div><div style="left:244.9px;top:1.5px;width:37.890000000000015px;height:12.43px;line-height:13.93px;text-align:right;overflow:hidden">104.32...</div><div style="left:283.79px;top:1.5px;width:37.89999999999998px;height:12.43px;line-height:13.93px;text-align:right;overflow:hidden">102.09...</div><div style="left:322.69px;top:1.5px;width:37.889999999999986px;height:12.43px;line-height:13.93px;text-align:right;overflow:hidden">93.5981</div><div style="left:361.58px;top:1.5px;width:37.900000000000034px;height:12.43px;line-height:13.93px;text-align:right;overflow:hidden">90.0390</div><div style="left:400.48px;top:1.5px;width:37.889999999999986px;height:12.43px;line-height:13.93px;text-align:right;overflow:hidden">107.24...</div><div style="left:439.37px;top:1.5px;width:37.889999999999986px;height:12.43px;line-height:13.93px;text-align:right;overflow:hidden">97.8688</div><div style="left:478.26px;top:1.5px;width:37.89999999999998px;height:12.43px;line-height:13.93px;text-align:right;overflow:hidden">102.94...</div><div style="left:517.16px;top:1.5px;width:37.889999999999986px;height:12.43px;line-height:13.93px;text-align:right;overflow:hidden">99.8633</div><div style="left:556.05px;top:1.5px;width:37.90000000000009px;height:12.43px;line-height:13.93px;text-align:right;overflow:hidden">104.14...</div><div style="left:594.95px;top:1.5px;width:37.889999999999986px;height:12.43px;line-height:13.93px;text-align:right;overflow:hidden">91.5574</div><div style="left:633.84px;top:1.5px;width:37.889999999999986px;height:12.43px;line-height:13.93px;text-align:right;overflow:hidden">101.13...</div><div style="left:672.73px;top:1.5px;width:37.89999999999998px;height:12.43px;line-height:13.93px;text-align:right;overflow:hidden">102.84...</div><div style="left:711.63px;top:1.5px;width:37.889999999999986px;height:12.43px;line-height:13.93px;text-align:right;overflow:hidden">98.6420</div><div style="left:750.52px;top:1.5px;width:37.89999999999998px;height:12.43px;line-height:13.93px;text-align:right;overflow:hidden">106.50...</div><div style="left:789.42px;top:1.5px;width:37.889999999999986px;height:12.43px;line-height:13.93px;text-align:right;overflow:hidden">100.62...</div><div style="left:828.31px;top:1.5px;width:37.8900000000001px;height:12.43px;line-height:13.93px;text-align:right;overflow:hidden">90.3689</div><div style="left:867.2px;top:1.5px;width:37.89999999999998px;height:12.43px;line-height:13.93px;text-align:right;overflow:hidden">108.00...</div><div style="left:906.1px;top:1.5px;width:37.889999999999986px;height:12.43px;line-height:13.93px;text-align:right;overflow:hidden">97.9633</div><div style="left:946.89px;top:1.5px;width:33.00999999999997px;height:12.43px;line-height:13.93px;overflow:hidden">108.0...</div><div style="left:981.8px;top:1.5px;width:33.200000000000024px;height:12.43px;line-height:13.93px;overflow:hidden">90.03...</div><div style="left:1016.9px;top:1.5px;width:33.1px;height:12.43px;line-height:13.93px;overflow:hidden">99.98...</div><div style="left:1051.9px;top:1.5px;width:32.80000000000005px;height:12.43px;line-height:13.93px;overflow:hidden">5.5958</div><div style="left:1086.6000000000001px;top:1.5px;width:35.999999999999865px;height:12.43px;line-height:13.93px;overflow:hidden">0.0000</div></div>
<div style="left:0;top:55.72px;width:1122.6px;height:13.93px;background:#fff;font-size:8.3px;color:#1a1a1a;letter-spacing:-0.3px;"><div style="left:0.7px;top:0.8px;width:63.3px;height:13.129999999999999px;line-height:13.93px;overflow:hidden">2021-10-05 00:00</div><div style="left:65.0px;top:0.8px;width:24.5px;height:13.129999999999999px;line-height:13.93px;overflow:hidden">5</div><div style="left:91.4px;top:0.8px;width:50.1px;height:13.129999999999999px;line-height:13.93px;overflow:hidden">TEST_PN5</div><div style="left:143.4px;top:0.8px;width:62.79999999999999px;height:13.129999999999999px;line-height:13.93px;overflow:hidden">W0-002-007</div><div style="left:208.1px;top:0.8px;width:36.80000000000002px;height:13.129999999999999px;line-height:13.93px;overflow:hidden">A</div><div style="left:244.9px;top:0.8px;width:37.890000000000015px;height:13.129999999999999px;line-height:13.93px;text-align:right;overflow:hidden">85.1126</div><div style="left:283.79px;top:0.8px;width:37.89999999999998px;height:13.129999999999999px;line-height:13.93px;text-align:right;overflow:hidden">99.8379</div><div style="left:322.69px;top:0.8px;width:37.889999999999986px;height:13.129999999999999px;line-height:13.93px;text-align:right;overflow:hidden">98.8123</div><div style="left:361.58px;top:0.8px;width:37.900000000000034px;height:13.129999999999999px;line-height:13.93px;text-align:right;overflow:hidden">100.2020</div><div style="left:400.48px;top:0.8px;width:37.889999999999986px;height:13.129999999999999px;line-height:13.93px;text-align:right;overflow:hidden">96.9662</div><div style="left:439.37px;top:0.8px;width:37.889999999999986px;height:13.129999999999999px;line-height:13.93px;text-align:right;overflow:hidden">85.0826</div><div style="left:478.26px;top:0.8px;width:37.89999999999998px;height:13.129999999999999px;line-height:13.93px;text-align:right;overflow:hidden">103.4170</div><div style="left:517.16px;top:0.8px;width:37.889999999999986px;height:13.129999999999999px;line-height:13.93px;text-align:right;overflow:hidden">104.0289</div><div style="left:556.05px;top:0.8px;width:37.90000000000009px;height:13.129999999999999px;line-height:13.93px;text-align:right;overflow:hidden">95.7327</div><div style="left:594.95px;top:0.8px;width:37.889999999999986px;height:13.129999999999999px;line-height:13.93px;text-align:right;overflow:hidden">111.5850</div><div style="left:633.84px;top:0.8px;width:37.889999999999986px;height:13.129999999999999px;line-height:13.93px;text-align:right;overflow:hidden">113.0158</div><div style="left:672.73px;top:0.8px;width:37.89999999999998px;height:13.129999999999999px;line-height:13.93px;text-align:right;overflow:hidden">105.3538</div><div style="left:711.63px;top:0.8px;width:37.889999999999986px;height:13.129999999999999px;line-height:13.93px;text-align:right;overflow:hidden">94.5526</div><div style="left:750.52px;top:0.8px;width:37.89999999999998px;height:13.129999999999999px;line-height:13.93px;text-align:right;overflow:hidden">98.3143</div><div style="left:789.42px;top:0.8px;width:37.889999999999986px;height:13.129999999999999px;line-height:13.93px;text-align:right;overflow:hidden">98.2708</div><div style="left:828.31px;top:0.8px;width:37.8900000000001px;height:13.129999999999999px;line-height:13.93px;text-align:right;overflow:hidden">112.9236</div><div style="left:867.2px;top:0.8px;width:37.89999999999998px;height:13.129999999999999px;line-height:13.93px;text-align:right;overflow:hidden">89.8151</div><div style="left:906.1px;top:0.8px;width:37.889999999999986px;height:13.129999999999999px;line-height:13.93px;text-align:right;overflow:hidden">88.7708</div><div style="left:946.89px;top:0.8px;width:33.00999999999997px;height:13.129999999999999px;line-height:13.93px;overflow:hidden">113.0158</div><div style="left:981.8px;top:0.8px;width:33.200000000000024px;height:13.129999999999999px;line-height:13.93px;overflow:hidden">85.0826</div><div style="left:1016.9px;top:0.8px;width:33.1px;height:13.129999999999999px;line-height:13.93px;overflow:hidden">98.9886</div><div style="left:1051.9px;top:0.8px;width:32.80000000000005px;height:13.129999999999999px;line-height:13.93px;overflow:hidden">8.5653</div><div style="left:1086.6000000000001px;top:0.8px;width:35.999999999999865px;height:13.129999999999999px;line-height:13.93px;overflow:hidden">0.0000</div></div>
<div style="left:0;top:69.65px;width:1122.6px;height:13.93px;background:#f5c4c4;font-size:9px;color:#1a1a1a;letter-spacing:0.05px;"><div style="left:0.7px;top:1.5px;width:63.3px;height:12.43px;line-height:13.93px;overflow:hidden">2021-10-06 0...</div><div style="left:65.0px;top:1.5px;width:24.5px;height:12.43px;line-height:13.93px;overflow:hidden">6</div><div style="left:91.4px;top:1.5px;width:50.1px;height:12.43px;line-height:13.93px;overflow:hidden">TEST_PN6</div><div style="left:143.4px;top:1.5px;width:62.79999999999999px;height:12.43px;line-height:13.93px;overflow:hidden">W0-002-008</div><div style="left:208.1px;top:1.5px;width:36.80000000000002px;height:12.43px;line-height:13.93px;overflow:hidden">A</div><div style="left:244.9px;top:1.5px;width:37.890000000000015px;height:12.43px;line-height:13.93px;text-align:right;overflow:hidden">97.4534</div><div style="left:283.79px;top:1.5px;width:37.89999999999998px;height:12.43px;line-height:13.93px;text-align:right;overflow:hidden">111.77...</div><div style="left:322.69px;top:1.5px;width:37.889999999999986px;height:12.43px;line-height:13.93px;text-align:right;overflow:hidden">107.08...</div><div style="left:361.58px;top:1.5px;width:37.900000000000034px;height:12.43px;line-height:13.93px;text-align:right;overflow:hidden">110.84...</div><div style="left:400.48px;top:1.5px;width:37.889999999999986px;height:12.43px;line-height:13.93px;text-align:right;overflow:hidden">109.60...</div><div style="left:439.37px;top:1.5px;width:37.889999999999986px;height:12.43px;line-height:13.93px;text-align:right;overflow:hidden">106.89...</div><div style="left:478.26px;top:1.5px;width:37.89999999999998px;height:12.43px;line-height:13.93px;text-align:right;overflow:hidden">105.49...</div><div style="left:517.16px;top:1.5px;width:37.889999999999986px;height:12.43px;line-height:13.93px;text-align:right;overflow:hidden">97.7645</div><div style="left:556.05px;top:1.5px;width:37.90000000000009px;height:12.43px;line-height:13.93px;text-align:right;overflow:hidden">103.81...</div><div style="left:594.95px;top:1.5px;width:37.889999999999986px;height:12.43px;line-height:13.93px;text-align:right;overflow:hidden">106.22...</div><div style="left:633.84px;top:1.5px;width:37.889999999999986px;height:12.43px;line-height:13.93px;text-align:right;overflow:hidden">102.24...</div><div style="left:672.73px;top:1.5px;width:37.89999999999998px;height:12.43px;line-height:13.93px;text-align:right;overflow:hidden">95.1225</div><div style="left:711.63px;top:1.5px;width:37.889999999999986px;height:12.43px;line-height:13.93px;text-align:right;overflow:hidden">109.68...</div><div style="left:750.52px;top:1.5px;width:37.89999999999998px;height:12.43px;line-height:13.93px;text-align:right;overflow:hidden">94.6040</div><div style="left:789.42px;top:1.5px;width:37.889999999999986px;height:12.43px;line-height:13.93px;text-align:right;overflow:hidden">110.08...</div><div style="left:828.31px;top:1.5px;width:37.8900000000001px;height:12.43px;line-height:13.93px;text-align:right;overflow:hidden">102.42...</div><div style="left:867.2px;top:1.5px;width:37.89999999999998px;height:12.43px;line-height:13.93px;text-align:right;overflow:hidden">111.50...</div><div style="left:906.1px;top:1.5px;width:37.889999999999986px;height:12.43px;line-height:13.93px;text-align:right;overflow:hidden">102.46...</div><div style="left:946.89px;top:1.5px;width:33.00999999999997px;height:12.43px;line-height:13.93px;overflow:hidden">111.7...</div><div style="left:981.8px;top:1.5px;width:33.200000000000024px;height:12.43px;line-height:13.93px;overflow:hidden">94.60...</div><div style="left:1016.9px;top:1.5px;width:33.1px;height:12.43px;line-height:13.93px;overflow:hidden">104.7...</div><div style="left:1051.9px;top:1.5px;width:32.80000000000005px;height:12.43px;line-height:13.93px;overflow:hidden">5.6191</div><div style="left:1086.6000000000001px;top:1.5px;width:35.999999999999865px;height:12.43px;line-height:13.93px;overflow:hidden">0.0000</div></div>
<div style="left:0;top:83.58px;width:1122.6px;height:13.93px;background:#f5c4c4;font-size:9px;color:#1a1a1a;letter-spacing:0.05px;"><div style="left:0.7px;top:1.5px;width:63.3px;height:12.43px;line-height:13.93px;overflow:hidden">2021-10-07 0...</div><div style="left:65.0px;top:1.5px;width:24.5px;height:12.43px;line-height:13.93px;overflow:hidden">7</div><div style="left:91.4px;top:1.5px;width:50.1px;height:12.43px;line-height:13.93px;overflow:hidden">TEST_PN7</div><div style="left:143.4px;top:1.5px;width:62.79999999999999px;height:12.43px;line-height:13.93px;overflow:hidden">W0-002-009</div><div style="left:208.1px;top:1.5px;width:36.80000000000002px;height:12.43px;line-height:13.93px;overflow:hidden">A</div><div style="left:244.9px;top:1.5px;width:37.890000000000015px;height:12.43px;line-height:13.93px;text-align:right;overflow:hidden">93.7660</div><div style="left:283.79px;top:1.5px;width:37.89999999999998px;height:12.43px;line-height:13.93px;text-align:right;overflow:hidden">101.66...</div><div style="left:322.69px;top:1.5px;width:37.889999999999986px;height:12.43px;line-height:13.93px;text-align:right;overflow:hidden">96.2629</div><div style="left:361.58px;top:1.5px;width:37.900000000000034px;height:12.43px;line-height:13.93px;text-align:right;overflow:hidden">105.47...</div><div style="left:400.48px;top:1.5px;width:37.889999999999986px;height:12.43px;line-height:13.93px;text-align:right;overflow:hidden">112.25...</div><div style="left:439.37px;top:1.5px;width:37.889999999999986px;height:12.43px;line-height:13.93px;text-align:right;overflow:hidden">89.8814</div><div style="left:478.26px;top:1.5px;width:37.89999999999998px;height:12.43px;line-height:13.93px;text-align:right;overflow:hidden">103.20...</div><div style="left:517.16px;top:1.5px;width:37.889999999999986px;height:12.43px;line-height:13.93px;text-align:right;overflow:hidden">101.65...</div><div style="left:556.05px;top:1.5px;width:37.90000000000009px;height:12.43px;line-height:13.93px;text-align:right;overflow:hidden">93.0769</div><div style="left:594.95px;top:1.5px;width:37.889999999999986px;height:12.43px;line-height:13.93px;text-align:right;overflow:hidden">101.84...</div><div style="left:633.84px;top:1.5px;width:37.889999999999986px;height:12.43px;line-height:13.93px;text-align:right;overflow:hidden">93.6186</div><div style="left:672.73px;top:1.5px;width:37.89999999999998px;height:12.43px;line-height:13.93px;text-align:right;overflow:hidden">100.42...</div><div style="left:711.63px;top:1.5px;width:37.889999999999986px;height:12.43px;line-height:13.93px;text-align:right;overflow:hidden">98.2948</div><div style="left:750.52px;top:1.5px;width:37.89999999999998px;height:12.43px;line-height:13.93px;text-align:right;overflow:hidden">93.8542</div><div style="left:789.42px;top:1.5px;width:37.889999999999986px;height:12.43px;line-height:13.93px;text-align:right;overflow:hidden">106.67...</div><div style="left:828.31px;top:1.5px;width:37.8900000000001px;height:12.43px;line-height:13.93px;text-align:right;overflow:hidden">102.62...</div><div style="left:867.2px;top:1.5px;width:37.89999999999998px;height:12.43px;line-height:13.93px;text-align:right;overflow:hidden">101.55...</div><div style="left:906.1px;top:1.5px;width:37.889999999999986px;height:12.43px;line-height:13.93px;text-align:right;overflow:hidden">100.39...</div><div style="left:946.89px;top:1.5px;width:33.00999999999997px;height:12.43px;line-height:13.93px;overflow:hidden">112.2...</div><div style="left:981.8px;top:1.5px;width:33.200000000000024px;height:12.43px;line-height:13.93px;overflow:hidden">89.88...</div><div style="left:1016.9px;top:1.5px;width:33.1px;height:12.43px;line-height:13.93px;overflow:hidden">99.80...</div><div style="left:1051.9px;top:1.5px;width:32.80000000000005px;height:12.43px;line-height:13.93px;overflow:hidden">5.6227</div><div style="left:1086.6000000000001px;top:1.5px;width:35.999999999999865px;height:12.43px;line-height:13.93px;overflow:hidden">0.0000</div></div>
<div style="left:0;top:97.50999999999999px;width:1122.6px;height:13.93px;background:#f5c4c4;font-size:9px;color:#1a1a1a;letter-spacing:0.05px;"><div style="left:0.7px;top:1.5px;width:63.3px;height:12.43px;line-height:13.93px;overflow:hidden">2021-10-08 0...</div><div style="left:65.0px;top:1.5px;width:24.5px;height:12.43px;line-height:13.93px;overflow:hidden">8</div><div style="left:91.4px;top:1.5px;width:50.1px;height:12.43px;line-height:13.93px;overflow:hidden">TEST_PN8</div><div style="left:143.4px;top:1.5px;width:62.79999999999999px;height:12.43px;line-height:13.93px;overflow:hidden">W0-002-010</div><div style="left:208.1px;top:1.5px;width:36.80000000000002px;height:12.43px;line-height:13.93px;overflow:hidden">A</div><div style="left:244.9px;top:1.5px;width:37.890000000000015px;height:12.43px;line-height:13.93px;text-align:right;overflow:hidden">97.2522</div><div style="left:283.79px;top:1.5px;width:37.89999999999998px;height:12.43px;line-height:13.93px;text-align:right;overflow:hidden">110.81...</div><div style="left:322.69px;top:1.5px;width:37.889999999999986px;height:12.43px;line-height:13.93px;text-align:right;overflow:hidden">91.6638</div><div style="left:361.58px;top:1.5px;width:37.900000000000034px;height:12.43px;line-height:13.93px;text-align:right;overflow:hidden">98.3089</div><div style="left:400.48px;top:1.5px;width:37.889999999999986px;height:12.43px;line-height:13.93px;text-align:right;overflow:hidden">99.1899</div><div style="left:439.37px;top:1.5px;width:37.889999999999986px;height:12.43px;line-height:13.93px;text-align:right;overflow:hidden">110.73...</div><div style="left:478.26px;top:1.5px;width:37.89999999999998px;height:12.43px;line-height:13.93px;text-align:right;overflow:hidden">105.25...</div><div style="left:517.16px;top:1.5px;width:37.889999999999986px;height:12.43px;line-height:13.93px;text-align:right;overflow:hidden">109.84...</div><div style="left:556.05px;top:1.5px;width:37.90000000000009px;height:12.43px;line-height:13.93px;text-align:right;overflow:hidden">98.6921</div><div style="left:594.95px;top:1.5px;width:37.889999999999986px;height:12.43px;line-height:13.93px;text-align:right;overflow:hidden">90.5165</div><div style="left:633.84px;top:1.5px;width:37.889999999999986px;height:12.43px;line-height:13.93px;text-align:right;overflow:hidden">102.15...</div><div style="left:672.73px;top:1.5px;width:37.89999999999998px;height:12.43px;line-height:13.93px;text-align:right;overflow:hidden">99.7012</div><div style="left:711.63px;top:1.5px;width:37.889999999999986px;height:12.43px;line-height:13.93px;text-align:right;overflow:hidden">89.5933</div><div style="left:750.52px;top:1.5px;width:37.89999999999998px;height:12.43px;line-height:13.93px;text-align:right;overflow:hidden">93.8175</div><div style="left:789.42px;top:1.5px;width:37.889999999999986px;height:12.43px;line-height:13.93px;text-align:right;overflow:hidden">104.83...</div><div style="left:828.31px;top:1.5px;width:37.8900000000001px;height:12.43px;line-height:13.93px;text-align:right;overflow:hidden">94.7681</div><div style="left:867.2px;top:1.5px;width:37.89999999999998px;height:12.43px;line-height:13.93px;text-align:right;overflow:hidden">101.00...</div><div style="left:906.1px;top:1.5px;width:37.889999999999986px;height:12.43px;line-height:13.93px;text-align:right;overflow:hidden">97.2177</div><div style="left:946.89px;top:1.5px;width:33.00999999999997px;height:12.43px;line-height:13.93px;overflow:hidden">110.8...</div><div style="left:981.8px;top:1.5px;width:33.200000000000024px;height:12.43px;line-height:13.93px;overflow:hidden">89.59...</div><div style="left:1016.9px;top:1.5px;width:33.1px;height:12.43px;line-height:13.93px;overflow:hidden">99.74...</div><div style="left:1051.9px;top:1.5px;width:32.80000000000005px;height:12.43px;line-height:13.93px;overflow:hidden">6.5907</div><div style="left:1086.6000000000001px;top:1.5px;width:35.999999999999865px;height:12.43px;line-height:13.93px;overflow:hidden">0.0000</div></div>
<div style="left:0;top:111.44px;width:1122.6px;height:13.93px;background:#f5c4c4;font-size:9px;color:#1a1a1a;letter-spacing:0.05px;"><div style="left:0.7px;top:1.5px;width:63.3px;height:12.43px;line-height:13.93px;overflow:hidden">2021-10-09 0...</div><div style="left:65.0px;top:1.5px;width:24.5px;height:12.43px;line-height:13.93px;overflow:hidden">9</div><div style="left:91.4px;top:1.5px;width:50.1px;height:12.43px;line-height:13.93px;overflow:hidden">TEST_PN9</div><div style="left:143.4px;top:1.5px;width:62.79999999999999px;height:12.43px;line-height:13.93px;overflow:hidden">W0-002-011</div><div style="left:208.1px;top:1.5px;width:36.80000000000002px;height:12.43px;line-height:13.93px;overflow:hidden">A</div><div style="left:244.9px;top:1.5px;width:37.890000000000015px;height:12.43px;line-height:13.93px;text-align:right;overflow:hidden">97.4944</div><div style="left:283.79px;top:1.5px;width:37.89999999999998px;height:12.43px;line-height:13.93px;text-align:right;overflow:hidden">95.6627</div><div style="left:322.69px;top:1.5px;width:37.889999999999986px;height:12.43px;line-height:13.93px;text-align:right;overflow:hidden">94.9819</div><div style="left:361.58px;top:1.5px;width:37.900000000000034px;height:12.43px;line-height:13.93px;text-align:right;overflow:hidden">95.0381</div><div style="left:400.48px;top:1.5px;width:37.889999999999986px;height:12.43px;line-height:13.93px;text-align:right;overflow:hidden">103.81...</div><div style="left:439.37px;top:1.5px;width:37.889999999999986px;height:12.43px;line-height:13.93px;text-align:right;overflow:hidden">102.57...</div><div style="left:478.26px;top:1.5px;width:37.89999999999998px;height:12.43px;line-height:13.93px;text-align:right;overflow:hidden">98.4692</div><div style="left:517.16px;top:1.5px;width:37.889999999999986px;height:12.43px;line-height:13.93px;text-align:right;overflow:hidden">96.6459</div><div style="left:556.05px;top:1.5px;width:37.90000000000009px;height:12.43px;line-height:13.93px;text-align:right;overflow:hidden">101.06...</div><div style="left:594.95px;top:1.5px;width:37.889999999999986px;height:12.43px;line-height:13.93px;text-align:right;overflow:hidden">106.62...</div><div style="left:633.84px;top:1.5px;width:37.889999999999986px;height:12.43px;line-height:13.93px;text-align:right;overflow:hidden">99.3071</div><div style="left:672.73px;top:1.5px;width:37.89999999999998px;height:12.43px;line-height:13.93px;text-align:right;overflow:hidden">107.32...</div><div style="left:711.63px;top:1.5px;width:37.889999999999986px;height:12.43px;line-height:13.93px;text-align:right;overflow:hidden">104.81...</div><div style="left:750.52px;top:1.5px;width:37.89999999999998px;height:12.43px;line-height:13.93px;text-align:right;overflow:hidden">108.22...</div><div style="left:789.42px;top:1.5px;width:37.889999999999986px;height:12.43px;line-height:13.93px;text-align:right;overflow:hidden">97.2932</div><div style="left:828.31px;top:1.5px;width:37.8900000000001px;height:12.43px;line-height:13.93px;text-align:right;overflow:hidden">99.7146</div><div style="left:867.2px;top:1.5px;width:37.89999999999998px;height:12.43px;line-height:13.93px;text-align:right;overflow:hidden">96.2956</div><div style="left:906.1px;top:1.5px;width:37.889999999999986px;height:12.43px;line-height:13.93px;text-align:right;overflow:hidden">90.0962</div><div style="left:946.89px;top:1.5px;width:33.00999999999997px;height:12.43px;line-height:13.93px;overflow:hidden">108.2...</div><div style="left:981.8px;top:1.5px;width:33.200000000000024px;height:12.43px;line-height:13.93px;overflow:hidden">90.09...</div><div style="left:1016.9px;top:1.5px;width:33.1px;height:12.43px;line-height:13.93px;overflow:hidden">99.74...</div><div style="left:1051.9px;top:1.5px;width:32.80000000000005px;height:12.43px;line-height:13.93px;overflow:hidden">4.9567</div><div style="left:1086.6000000000001px;top:1.5px;width:35.999999999999865px;height:12.43px;line-height:13.93px;overflow:hidden">0.0000</div></div>
<div style="left:0;top:125.37px;width:1122.6px;height:13.93px;background:#f5c4c4;font-size:9px;color:#1a1a1a;letter-spacing:0.05px;"><div style="left:0.7px;top:1.5px;width:63.3px;height:12.43px;line-height:13.93px;overflow:hidden"></div><div style="left:65.0px;top:1.5px;width:24.5px;height:12.43px;line-height:13.93px;overflow:hidden"></div><div style="left:91.4px;top:1.5px;width:50.1px;height:12.43px;line-height:13.93px;overflow:hidden"></div><div style="left:143.4px;top:1.5px;width:62.79999999999999px;height:12.43px;line-height:13.93px;overflow:hidden"></div><div style="left:208.1px;top:1.5px;width:36.80000000000002px;height:12.43px;line-height:13.93px;overflow:hidden"></div><div style="left:244.9px;top:1.5px;width:37.890000000000015px;height:12.43px;line-height:13.93px;text-align:right;overflow:hidden"></div><div style="left:283.79px;top:1.5px;width:37.89999999999998px;height:12.43px;line-height:13.93px;text-align:right;overflow:hidden"></div><div style="left:322.69px;top:1.5px;width:37.889999999999986px;height:12.43px;line-height:13.93px;text-align:right;overflow:hidden"></div><div style="left:361.58px;top:1.5px;width:37.900000000000034px;height:12.43px;line-height:13.93px;text-align:right;overflow:hidden"></div><div style="left:400.48px;top:1.5px;width:37.889999999999986px;height:12.43px;line-height:13.93px;text-align:right;overflow:hidden"></div><div style="left:439.37px;top:1.5px;width:37.889999999999986px;height:12.43px;line-height:13.93px;text-align:right;overflow:hidden"></div><div style="left:478.26px;top:1.5px;width:37.89999999999998px;height:12.43px;line-height:13.93px;text-align:right;overflow:hidden"></div><div style="left:517.16px;top:1.5px;width:37.889999999999986px;height:12.43px;line-height:13.93px;text-align:right;overflow:hidden"></div><div style="left:556.05px;top:1.5px;width:37.90000000000009px;height:12.43px;line-height:13.93px;text-align:right;overflow:hidden"></div><div style="left:594.95px;top:1.5px;width:37.889999999999986px;height:12.43px;line-height:13.93px;text-align:right;overflow:hidden"></div><div style="left:633.84px;top:1.5px;width:37.889999999999986px;height:12.43px;line-height:13.93px;text-align:right;overflow:hidden"></div><div style="left:672.73px;top:1.5px;width:37.89999999999998px;height:12.43px;line-height:13.93px;text-align:right;overflow:hidden"></div><div style="left:711.63px;top:1.5px;width:37.889999999999986px;height:12.43px;line-height:13.93px;text-align:right;overflow:hidden"></div><div style="left:750.52px;top:1.5px;width:37.89999999999998px;height:12.43px;line-height:13.93px;text-align:right;overflow:hidden"></div><div style="left:789.42px;top:1.5px;width:37.889999999999986px;height:12.43px;line-height:13.93px;text-align:right;overflow:hidden"></div><div style="left:828.31px;top:1.5px;width:37.8900000000001px;height:12.43px;line-height:13.93px;text-align:right;overflow:hidden"></div><div style="left:867.2px;top:1.5px;width:37.89999999999998px;height:12.43px;line-height:13.93px;text-align:right;overflow:hidden"></div><div style="left:906.1px;top:1.5px;width:37.889999999999986px;height:12.43px;line-height:13.93px;text-align:right;overflow:hidden"></div><div style="left:946.89px;top:1.5px;width:33.00999999999997px;height:12.43px;line-height:13.93px;overflow:hidden"></div><div style="left:981.8px;top:1.5px;width:33.200000000000024px;height:12.43px;line-height:13.93px;overflow:hidden"></div><div style="left:1016.9px;top:1.5px;width:33.1px;height:12.43px;line-height:13.93px;overflow:hidden"></div><div style="left:1051.9px;top:1.5px;width:32.80000000000005px;height:12.43px;line-height:13.93px;overflow:hidden"></div><div style="left:1086.6000000000001px;top:1.5px;width:35.999999999999865px;height:12.43px;line-height:13.93px;overflow:hidden"></div></div>
</div>
<div style="left:1124.6px;top:503.3px;width:10.5px;height:15.7px;background:linear-gradient(#f0f0f0,#dadada)"></div>
<div style="left:1124.6px;top:519px;width:10.5px;height:129px;background:linear-gradient(90deg,#e4e4e4,#f4f4f4)"></div>
<div style="left:1124.6px;top:520px;width:10px;height:9.3px;background:linear-gradient(#fafafa,#e0e0e0);border:1px solid #c4c4c4;border-radius:1px"><svg width="8" height="8" style="position:absolute;left:0;top:0"><path d="M2 5.2L4 3L6 5.2Z" fill="#666"/></svg></div>
<div style="left:1124.6px;top:529.7px;width:10px;height:31.5px;background:linear-gradient(90deg,#f8f8f8,#e2e2e2);border:1px solid #c4c4c4;border-radius:2px"><svg width="8" height="6" style="position:absolute;left:0;top:13px"><path d="M2 1H6M2 2.5H6M2 4H6" stroke="#888" stroke-width="0.7"/></svg></div>
<div style="left:1124.6px;top:637.5px;width:10px;height:9.5px;background:linear-gradient(#fafafa,#e0e0e0);border:1px solid #c4c4c4;border-radius:1px"><svg width="8" height="8" style="position:absolute;left:0;top:0"><path d="M2 3L4 5.2L6 3Z" fill="#666"/></svg></div>
<div style="left:1140px;top:19.5px;width:123.5px;height:99.8px;border:1px solid #9db9e3;"></div>
<div style="left:1147px;top:17.5px;width:6px;height:4px;background:#fff"></div>
<div style="left:1128.5px;top:21.9px;width:60px;height:12px;line-height:12px;font-size:8.6px;letter-spacing:-0.25px;color:#23467f;text-align:right">样本均值 :</div>
<div style="left:1190.8px;top:21.099999999999998px;width:69.60000000000014px;height:13.6px;background:#fff;border:1px solid #d6d6d6"><div style="left:3px;top:0;height:11.6px;line-height:13px;font-size:8.4px;letter-spacing:-0.3px;color:#2a2a2a">100.2352</div></div>
<div style="left:1128.5px;top:38.3px;width:60px;height:12px;line-height:12px;font-size:8.6px;letter-spacing:-0.25px;color:#23467f;text-align:right">max :</div>
<div style="left:1190.8px;top:37.5px;width:69.60000000000014px;height:13.6px;background:#fff;border:1px solid #d6d6d6"><div style="left:3px;top:0;height:11.6px;line-height:13px;font-size:8.4px;letter-spacing:-0.3px;color:#2a2a2a">114.6318</div></div>
<div style="left:1128.5px;top:54.7px;width:60px;height:12px;line-height:12px;font-size:8.6px;letter-spacing:-0.25px;color:#23467f;text-align:right">min :</div>
<div style="left:1190.8px;top:53.900000000000006px;width:69.60000000000014px;height:13.6px;background:#fff;border:1px solid #d6d6d6"><div style="left:3px;top:0;height:11.6px;line-height:13px;font-size:8.4px;letter-spacing:-0.3px;color:#2a2a2a">82.8330</div></div>
<div style="left:1128.5px;top:71.1px;width:60px;height:12px;line-height:12px;font-size:8.6px;letter-spacing:-0.25px;color:#23467f;text-align:right">σp :</div>
<div style="left:1190.8px;top:70.3px;width:69.60000000000014px;height:13.6px;background:#fff;border:1px solid #d6d6d6"><div style="left:3px;top:0;height:11.6px;line-height:13px;font-size:8.4px;letter-spacing:-0.3px;color:#2a2a2a">6.2160</div></div>
<div style="left:1128.5px;top:87.5px;width:60px;height:12px;line-height:12px;font-size:8.6px;letter-spacing:-0.25px;color:#23467f;text-align:right">sbar :</div>
<div style="left:1190.8px;top:86.7px;width:69.60000000000014px;height:13.6px;background:#fff;border:1px solid #d6d6d6"><div style="left:3px;top:0;height:11.6px;line-height:13px;font-size:8.4px;letter-spacing:-0.3px;color:#2a2a2a">6.0513</div></div>
<div style="left:1128.5px;top:103.8px;width:60px;height:12px;line-height:12px;font-size:8.6px;letter-spacing:-0.25px;color:#23467f;text-align:right">σc :</div>
<div style="left:1190.8px;top:103.0px;width:69.60000000000014px;height:13.6px;background:#fff;border:1px solid #d6d6d6"><div style="left:3px;top:0;height:11.6px;line-height:13px;font-size:8.4px;letter-spacing:-0.3px;color:#2a2a2a">6.1409</div></div>
<div style="left:1140px;top:124.4px;width:123.5px;height:119.4px;border:1px solid #9db9e3;"></div>
<div style="left:1147px;top:122.4px;width:23px;height:4px;background:#fff"></div>
<div style="left:1150.3px;top:118.4px;height:12px;line-height:12px;font-size:8px;color:#222">Xbar</div>
<div style="left:1128.5px;top:131.2px;width:60px;height:12px;line-height:12px;font-size:8.6px;letter-spacing:-0.25px;color:#23467f;text-align:right">UCL :</div>
<div style="left:1190.8px;top:130.39999999999998px;width:69.60000000000014px;height:13.6px;background:#fff;border:1px solid #d6d6d6"><div style="left:3px;top:0;height:11.6px;line-height:13px;font-size:8.4px;letter-spacing:-0.3px;color:#2a2a2a">111.7333</div></div>
<div style="left:1128.5px;top:147.7px;width:60px;height:12px;line-height:12px;font-size:8.6px;letter-spacing:-0.25px;color:#23467f;text-align:right">CL+2σ :</div>
<div style="left:1190.8px;top:146.89999999999998px;width:69.60000000000014px;height:13.6px;background:#fff;border:1px solid #d6d6d6"><div style="left:3px;top:0;height:11.6px;line-height:13px;font-size:8.4px;letter-spacing:-0.3px;color:#2a2a2a">108.1306</div></div>
<div style="left:1128.5px;top:164.2px;width:60px;height:12px;line-height:12px;font-size:8.6px;letter-spacing:-0.25px;color:#23467f;text-align:right">CL+1σ :</div>
<div style="left:1190.8px;top:163.39999999999998px;width:69.60000000000014px;height:13.6px;background:#fff;border:1px solid #d6d6d6"><div style="left:3px;top:0;height:11.6px;line-height:13px;font-size:8.4px;letter-spacing:-0.3px;color:#2a2a2a">104.5278</div></div>
<div style="left:1128.5px;top:180.7px;width:60px;height:12px;line-height:12px;font-size:8.6px;letter-spacing:-0.25px;color:#23467f;text-align:right">CL :</div>
<div style="left:1190.8px;top:179.89999999999998px;width:69.60000000000014px;height:13.6px;background:#fff;border:1px solid #d6d6d6"><div style="left:3px;top:0;height:11.6px;line-height:13px;font-size:8.4px;letter-spacing:-0.3px;color:#2a2a2a">100.9250</div></div>
<div style="left:1128.5px;top:197.1px;width:60px;height:12px;line-height:12px;font-size:8.6px;letter-spacing:-0.25px;color:#23467f;text-align:right">CL-1σ :</div>
<div style="left:1190.8px;top:196.29999999999998px;width:69.60000000000014px;height:13.6px;background:#fff;border:1px solid #d6d6d6"><div style="left:3px;top:0;height:11.6px;line-height:13px;font-size:8.4px;letter-spacing:-0.3px;color:#2a2a2a">97.3223</div></div>
<div style="left:1128.5px;top:213.6px;width:60px;height:12px;line-height:12px;font-size:8.6px;letter-spacing:-0.25px;color:#23467f;text-align:right">CL-2σ :</div>
<div style="left:1190.8px;top:212.79999999999998px;width:69.60000000000014px;height:13.6px;background:#fff;border:1px solid #d6d6d6"><div style="left:3px;top:0;height:11.6px;line-height:13px;font-size:8.4px;letter-spacing:-0.3px;color:#2a2a2a">93.7195</div></div>
<div style="left:1128.5px;top:230.1px;width:60px;height:12px;line-height:12px;font-size:8.6px;letter-spacing:-0.25px;color:#23467f;text-align:right">LCL :</div>
<div style="left:1190.8px;top:229.29999999999998px;width:69.60000000000014px;height:13.6px;background:#fff;border:1px solid #d6d6d6"><div style="left:3px;top:0;height:11.6px;line-height:13px;font-size:8.4px;letter-spacing:-0.3px;color:#2a2a2a">90.1167</div></div>
<div style="left:1140px;top:249.6px;width:123.5px;height:120.70000000000002px;border:1px solid #9db9e3;"></div>
<div style="left:1147px;top:247.6px;width:12px;height:4px;background:#fff"></div>
<div style="left:1150.3px;top:243.6px;height:12px;line-height:12px;font-size:8px;color:#222">s</div>
<div style="left:1128.5px;top:257.1px;width:60px;height:12px;line-height:12px;font-size:8.6px;letter-spacing:-0.25px;color:#23467f;text-align:right">UCL :</div>
<div style="left:1190.8px;top:256.3px;width:69.60000000000014px;height:13.6px;background:#fff;border:1px solid #d6d6d6"><div style="left:3px;top:0;height:11.6px;line-height:13px;font-size:8.4px;letter-spacing:-0.3px;color:#2a2a2a">22.8510</div></div>
<div style="left:1128.5px;top:273.5px;width:60px;height:12px;line-height:12px;font-size:8.6px;letter-spacing:-0.25px;color:#23467f;text-align:right">CL+2σ :</div>
<div style="left:1190.8px;top:272.7px;width:69.60000000000014px;height:13.6px;background:#fff;border:1px solid #d6d6d6"><div style="left:3px;top:0;height:11.6px;line-height:13px;font-size:8.4px;letter-spacing:-0.3px;color:#2a2a2a">20.2518</div></div>
<div style="left:1128.5px;top:290.0px;width:60px;height:12px;line-height:12px;font-size:8.6px;letter-spacing:-0.25px;color:#23467f;text-align:right">CL+1σ :</div>
<div style="left:1190.8px;top:289.2px;width:69.60000000000014px;height:13.6px;background:#fff;border:1px solid #d6d6d6"><div style="left:3px;top:0;height:11.6px;line-height:13px;font-size:8.4px;letter-spacing:-0.3px;color:#2a2a2a">17.6525</div></div>
<div style="left:1128.5px;top:306.5px;width:60px;height:12px;line-height:12px;font-size:8.6px;letter-spacing:-0.25px;color:#23467f;text-align:right">CL :</div>
<div style="left:1190.8px;top:305.7px;width:69.60000000000014px;height:13.6px;background:#fff;border:1px solid #d6d6d6"><div style="left:3px;top:0;height:11.6px;line-height:13px;font-size:8.4px;letter-spacing:-0.3px;color:#2a2a2a">15.0533</div></div>
<div style="left:1128.5px;top:322.9px;width:60px;height:12px;line-height:12px;font-size:8.6px;letter-spacing:-0.25px;color:#23467f;text-align:right">CL-1σ :</div>
<div style="left:1190.8px;top:322.09999999999997px;width:69.60000000000014px;height:13.6px;background:#fff;border:1px solid #d6d6d6"><div style="left:3px;top:0;height:11.6px;line-height:13px;font-size:8.4px;letter-spacing:-0.3px;color:#2a2a2a">12.4541</div></div>
<div style="left:1128.5px;top:339.3px;width:60px;height:12px;line-height:12px;font-size:8.6px;letter-spacing:-0.25px;color:#23467f;text-align:right">CL-2σ :</div>
<div style="left:1190.8px;top:338.5px;width:69.60000000000014px;height:13.6px;background:#fff;border:1px solid #d6d6d6"><div style="left:3px;top:0;height:11.6px;line-height:13px;font-size:8.4px;letter-spacing:-0.3px;color:#2a2a2a">9.8549</div></div>
<div style="left:1128.5px;top:355.5px;width:60px;height:12px;line-height:12px;font-size:8.6px;letter-spacing:-0.25px;color:#23467f;text-align:right">LCL :</div>
<div style="left:1190.8px;top:354.7px;width:69.60000000000014px;height:13.6px;background:#fff;border:1px solid #d6d6d6"><div style="left:3px;top:0;height:11.6px;line-height:13px;font-size:8.4px;letter-spacing:-0.3px;color:#2a2a2a">7.2557</div></div>
<div style="left:1140px;top:376.7px;width:123.5px;height:135.3px;border:1px solid #9db9e3;"></div>
<div style="left:1147px;top:374.7px;width:37px;height:4px;background:#fff"></div>
<div style="left:1150.3px;top:370.7px;height:12px;line-height:12px;font-size:8px;color:#222">过程数据</div>
<div style="left:1128.5px;top:383.5px;width:60px;height:12px;line-height:12px;font-size:8.6px;letter-spacing:-0.25px;color:#23467f;text-align:right">规格下限 :</div>
<div style="left:1190.8px;top:382.7px;width:69.60000000000014px;height:13.6px;background:#fff;border:1px solid #d6d6d6"><div style="left:3px;top:0;height:11.6px;line-height:13px;font-size:8.4px;letter-spacing:-0.3px;color:#2a2a2a">80.0000</div></div>
<div style="left:1128.5px;top:400.0px;width:60px;height:12px;line-height:12px;font-size:8.6px;letter-spacing:-0.25px;color:#23467f;text-align:right">目标 :</div>
<div style="left:1190.8px;top:399.2px;width:69.60000000000014px;height:13.6px;background:#fff;border:1px solid #d6d6d6"><div style="left:3px;top:0;height:11.6px;line-height:13px;font-size:8.4px;letter-spacing:-0.3px;color:#2a2a2a">100.0000</div></div>
<div style="left:1128.5px;top:416.6px;width:60px;height:12px;line-height:12px;font-size:8.6px;letter-spacing:-0.25px;color:#23467f;text-align:right">规格上限 :</div>
<div style="left:1190.8px;top:415.8px;width:69.60000000000014px;height:13.6px;background:#fff;border:1px solid #d6d6d6"><div style="left:3px;top:0;height:11.6px;line-height:13px;font-size:8.4px;letter-spacing:-0.3px;color:#2a2a2a">120.0000</div></div>
<div style="left:1128.5px;top:433.2px;width:60px;height:12px;line-height:12px;font-size:8.6px;letter-spacing:-0.25px;color:#23467f;text-align:right">样本均值 :</div>
<div style="left:1190.8px;top:432.4px;width:69.60000000000014px;height:13.6px;background:#fff;border:1px solid #d6d6d6"><div style="left:3px;top:0;height:11.6px;line-height:13px;font-size:8.4px;letter-spacing:-0.3px;color:#2a2a2a">100.2352</div></div>
<div style="left:1128.5px;top:449.8px;width:60px;height:12px;line-height:12px;font-size:8.6px;letter-spacing:-0.25px;color:#23467f;text-align:right">样本N :</div>
<div style="left:1190.8px;top:449.0px;width:69.60000000000014px;height:13.6px;background:#fff;border:1px solid #d6d6d6"><div style="left:3px;top:0;height:11.6px;line-height:13px;font-size:8.4px;letter-spacing:-0.3px;color:#2a2a2a">540</div></div>
<div style="left:1128.5px;top:466px;width:60px;height:10px;line-height:10px;font-size:8px;color:#1e3d73;text-align:right">标准差(整</div>
<div style="left:1128.5px;top:476px;width:60px;height:10px;line-height:10px;font-size:8px;color:#1e3d73;text-align:right">体) :</div>
<div style="left:1190.8px;top:468.9px;width:69.60000000000014px;height:13.6px;background:#fff;border:1px solid #d6d6d6"><div style="left:3px;top:0;height:11.6px;line-height:13px;font-size:8.4px;letter-spacing:-0.3px;color:#2a2a2a">6.2160</div></div>
<div style="left:1128.5px;top:490px;width:60px;height:10px;line-height:10px;font-size:8px;color:#1e3d73;text-align:right">标准差(组</div>
<div style="left:1128.5px;top:500px;width:60px;height:10px;line-height:10px;font-size:8px;color:#1e3d73;text-align:right">内) :</div>
<div style="left:1190.8px;top:493.3px;width:69.60000000000014px;height:13.6px;background:#fff;border:1px solid #d6d6d6"><div style="left:3px;top:0;height:11.6px;line-height:13px;font-size:8.4px;letter-spacing:-0.3px;color:#2a2a2a">6.1409</div></div>
<div style="left:1140px;top:518.6px;width:123.5px;height:38.60000000000002px;border:1px solid #9db9e3;"></div>
<div style="left:1147px;top:516.6px;width:37px;height:4px;background:#fff"></div>
<div style="left:1150.3px;top:512.6px;height:12px;line-height:12px;font-size:8px;color:#222">整体能力</div>
<div style="left:1123.5px;top:525.5px;width:40px;height:12px;line-height:12px;font-size:8.6px;letter-spacing:-0.25px;color:#23467f;text-align:right">Pp :</div>
<div style="left:1166.2px;top:524.7px;width:33.2px;height:13.6px;background:#fff;border:1px solid #d6d6d6"><div style="left:3px;top:0;height:11.6px;line-height:13px;font-size:8.4px;letter-spacing:-0.3px;color:#2a2a2a">1.07</div></div>
<div style="left:1184px;top:525.5px;width:40px;height:12px;line-height:12px;font-size:8.6px;letter-spacing:-0.25px;color:#23467f;text-align:right">PPL :</div>
<div style="left:1226.4px;top:524.7px;width:33.2px;height:13.6px;background:#fff;border:1px solid #d6d6d6"><div style="left:3px;top:0;height:11.6px;line-height:13px;font-size:8.4px;letter-spacing:-0.3px;color:#2a2a2a">1.09</div></div>
<div style="left:1123.5px;top:542.0px;width:40px;height:12px;line-height:12px;font-size:8.6px;letter-spacing:-0.25px;color:#23467f;text-align:right">PPU :</div>
<div style="left:1166.2px;top:541.2px;width:33.2px;height:13.6px;background:#fff;border:1px solid #d6d6d6"><div style="left:3px;top:0;height:11.6px;line-height:13px;font-size:8.4px;letter-spacing:-0.3px;color:#2a2a2a">1.06</div></div>
<div style="left:1184px;top:542.0px;width:40px;height:12px;line-height:12px;font-size:8.6px;letter-spacing:-0.25px;color:#23467f;text-align:right">Ppk :</div>
<div style="left:1226.4px;top:541.2px;width:33.2px;height:13.6px;background:#fff;border:1px solid #d6d6d6"><div style="left:3px;top:0;height:11.6px;line-height:13px;font-size:8.4px;letter-spacing:-0.3px;color:#2a2a2a">1.06</div></div>
<div style="left:1140px;top:562.9px;width:123.5px;height:38.30000000000007px;border:1px solid #9db9e3;"></div>
<div style="left:1147px;top:560.9px;width:37px;height:4px;background:#fff"></div>
<div style="left:1150.3px;top:556.9px;height:12px;line-height:12px;font-size:8px;color:#222">潜在能力</div>
<div style="left:1123.5px;top:570.0px;width:40px;height:12px;line-height:12px;font-size:8.6px;letter-spacing:-0.25px;color:#23467f;text-align:right">Cp :</div>
<div style="left:1166.2px;top:569.2px;width:33.2px;height:13.6px;background:#fff;border:1px solid #d6d6d6"><div style="left:3px;top:0;height:11.6px;line-height:13px;font-size:8.4px;letter-spacing:-0.3px;color:#2a2a2a">1.09</div></div>
<div style="left:1184px;top:570.0px;width:40px;height:12px;line-height:12px;font-size:8.6px;letter-spacing:-0.25px;color:#23467f;text-align:right">CPL :</div>
<div style="left:1226.4px;top:569.2px;width:33.2px;height:13.6px;background:#fff;border:1px solid #d6d6d6"><div style="left:3px;top:0;height:11.6px;line-height:13px;font-size:8.4px;letter-spacing:-0.3px;color:#2a2a2a">1.10</div></div>
<div style="left:1123.5px;top:586.6px;width:40px;height:12px;line-height:12px;font-size:8.6px;letter-spacing:-0.25px;color:#23467f;text-align:right">CPU :</div>
<div style="left:1166.2px;top:585.8000000000001px;width:33.2px;height:13.6px;background:#fff;border:1px solid #d6d6d6"><div style="left:3px;top:0;height:11.6px;line-height:13px;font-size:8.4px;letter-spacing:-0.3px;color:#2a2a2a">1.07</div></div>
<div style="left:1184px;top:586.6px;width:40px;height:12px;line-height:12px;font-size:8.6px;letter-spacing:-0.25px;color:#23467f;text-align:right">Cpk :</div>
<div style="left:1226.4px;top:585.8000000000001px;width:33.2px;height:13.6px;background:#fff;border:1px solid #d6d6d6"><div style="left:3px;top:0;height:11.6px;line-height:13px;font-size:8.4px;letter-spacing:-0.3px;color:#2a2a2a">1.07</div></div></body></html>
